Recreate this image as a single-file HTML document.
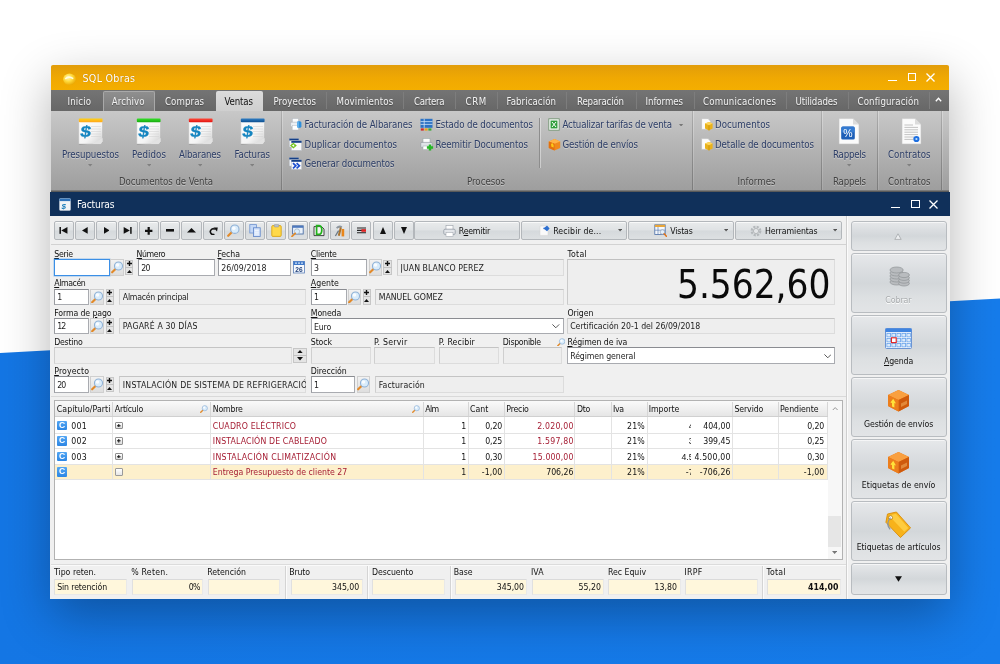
<!DOCTYPE html>
<html lang="es"><head><meta charset="utf-8"><title>SQL Obras - Facturas</title>
<style>
html,body{margin:0;padding:0}
body{width:1000px;height:664px;overflow:hidden;position:relative;background:#f7f7f7;font-family:"Liberation Sans",sans-serif}
div,span.t,svg{position:absolute;box-sizing:border-box}
span.t{display:block}
u{text-decoration:underline;text-underline-offset:1px;text-decoration-thickness:0.8px}
</style></head>
<body>
<div id="app" style="left:0;top:0;width:1000px;height:664px;overflow:hidden;will-change:transform">
<div style="left:0px;top:0px;width:1000px;height:664px;background:#ffffff"></div>
<svg style="left:0;top:0" width="1000" height="664" viewBox="0 0 1000 664"><defs><linearGradient id="bg" x1="0" x2="1" y1="0" y2="0"><stop offset="0" stop-color="#1476e4"/><stop offset="1" stop-color="#167ceb"/></linearGradient></defs><polygon points="0,353 1000,298.5 1000,664 0,664" fill="url(#bg)"/></svg>
<div style="left:51px;top:66px;width:898px;height:533px;box-shadow:0 16px 50px 0px rgba(0,0,0,0.30);background:#888;border-radius:2px"></div>
<div style="left:51px;top:65px;width:898px;height:25px;background:linear-gradient(#e29d0a,#f0a902 55%,#f4ae00);border-radius:2px 2px 0 0"></div>
<div style="left:51px;top:89.8px;width:898px;height:21px;background:linear-gradient(#747474,#676767)"></div>
<div style="left:51px;top:110.5px;width:898px;height:81px;background:linear-gradient(#c8c8c8,#b4b4b4 45%,#9d9d9d)"></div>
<div style="left:51px;top:189.5px;width:898px;height:2px;background:linear-gradient(#8a8a8a,#4a4a4a)"></div>
<svg style="left:61.6px;top:72px" width="15" height="14" viewBox="0 0 14 13"><defs><radialGradient id="lg" cx="0.4" cy="0.35" r="0.7"><stop offset="0" stop-color="#fff6b0"/><stop offset="0.5" stop-color="#ffd93a"/><stop offset="1" stop-color="#e8a400"/></radialGradient></defs><ellipse cx="7" cy="6.8" rx="6" ry="5.4" fill="url(#lg)"/><path d="M3 6.5 Q6 3.2 10.5 6.2" stroke="#fffbe0" stroke-width="1.4" fill="none"/></svg>
<span class="t" style="top:70.60px;font-size:10.6px;line-height:14.8px;color:#fff;white-space:pre;letter-spacing:0.291px;font-family:'DejaVu Sans Condensed','Liberation Sans',sans-serif;text-shadow:0 0 1px rgba(120,70,0,.5);left:82.50px;">SQL Obras</span>
<div style="left:888px;top:80.2px;width:8.5px;height:1.2px;background:#fff"></div>
<div style="left:907.5px;top:73px;width:8.6px;height:8.2px;border:1.2px solid #fff"></div>
<svg style="left:926px;top:72.7px" width="9" height="9" viewBox="0 0 9 9"><path d="M0.5 0.5 L8.5 8.5 M8.5 0.5 L0.5 8.5" stroke="#fff" stroke-width="1.3" fill="none"/></svg>
<div style="left:103px;top:91px;width:51.5px;height:19.5px;background:linear-gradient(#8f8f8f,#7a7a7a);border:1px solid #a9a9a9;border-bottom:none;border-radius:2px 2px 0 0"></div>
<div style="left:216px;top:91px;width:46.5px;height:20px;background:linear-gradient(#dcdcdc,#cfcfcf);border-radius:2px 2px 0 0"></div>
<span class="t" style="top:95.20px;font-size:9.6px;line-height:13.4px;color:#f2f2f2;white-space:pre;letter-spacing:0.131px;font-family:'DejaVu Sans Condensed','Liberation Sans',sans-serif;text-shadow:0 1px 1px rgba(0,0,0,.35);left:67.50px;">Inicio</span>
<span class="t" style="top:95.20px;font-size:9.6px;line-height:13.4px;color:#f2f2f2;white-space:pre;letter-spacing:0.083px;font-family:'DejaVu Sans Condensed','Liberation Sans',sans-serif;text-shadow:0 1px 1px rgba(0,0,0,.35);left:111.75px;">Archivo</span>
<span class="t" style="top:95.20px;font-size:9.6px;line-height:13.4px;color:#f2f2f2;white-space:pre;letter-spacing:0.078px;font-family:'DejaVu Sans Condensed','Liberation Sans',sans-serif;text-shadow:0 1px 1px rgba(0,0,0,.35);left:165.00px;">Compras</span>
<span class="t" style="top:95.20px;font-size:9.6px;line-height:13.4px;color:#111;white-space:pre;letter-spacing:-0.122px;font-family:'DejaVu Sans Condensed','Liberation Sans',sans-serif;left:224.50px;">Ventas</span>
<span class="t" style="top:95.20px;font-size:9.6px;line-height:13.4px;color:#f2f2f2;white-space:pre;letter-spacing:0.064px;font-family:'DejaVu Sans Condensed','Liberation Sans',sans-serif;text-shadow:0 1px 1px rgba(0,0,0,.35);left:273.50px;">Proyectos</span>
<span class="t" style="top:95.20px;font-size:9.6px;line-height:13.4px;color:#f2f2f2;white-space:pre;letter-spacing:0.177px;font-family:'DejaVu Sans Condensed','Liberation Sans',sans-serif;text-shadow:0 1px 1px rgba(0,0,0,.35);left:336.50px;">Movimientos</span>
<span class="t" style="top:95.20px;font-size:9.6px;line-height:13.4px;color:#f2f2f2;white-space:pre;letter-spacing:-0.318px;font-family:'DejaVu Sans Condensed','Liberation Sans',sans-serif;text-shadow:0 1px 1px rgba(0,0,0,.35);left:414.00px;">Cartera</span>
<span class="t" style="top:95.20px;font-size:9.6px;line-height:13.4px;color:#f2f2f2;white-space:pre;letter-spacing:0.633px;font-family:'DejaVu Sans Condensed','Liberation Sans',sans-serif;text-shadow:0 1px 1px rgba(0,0,0,.35);left:465.50px;">CRM</span>
<span class="t" style="top:95.20px;font-size:9.6px;line-height:13.4px;color:#f2f2f2;white-space:pre;letter-spacing:0.077px;font-family:'DejaVu Sans Condensed','Liberation Sans',sans-serif;text-shadow:0 1px 1px rgba(0,0,0,.35);left:506.50px;">Fabricación</span>
<span class="t" style="top:95.20px;font-size:9.6px;line-height:13.4px;color:#f2f2f2;white-space:pre;letter-spacing:-0.155px;font-family:'DejaVu Sans Condensed','Liberation Sans',sans-serif;text-shadow:0 1px 1px rgba(0,0,0,.35);left:577.00px;">Reparación</span>
<span class="t" style="top:95.20px;font-size:9.6px;line-height:13.4px;color:#f2f2f2;white-space:pre;letter-spacing:-0.062px;font-family:'DejaVu Sans Condensed','Liberation Sans',sans-serif;text-shadow:0 1px 1px rgba(0,0,0,.35);left:645.50px;">Informes</span>
<span class="t" style="top:95.20px;font-size:9.6px;line-height:13.4px;color:#f2f2f2;white-space:pre;letter-spacing:0.169px;font-family:'DejaVu Sans Condensed','Liberation Sans',sans-serif;text-shadow:0 1px 1px rgba(0,0,0,.35);left:703.00px;">Comunicaciones</span>
<span class="t" style="top:95.20px;font-size:9.6px;line-height:13.4px;color:#f2f2f2;white-space:pre;letter-spacing:-0.108px;font-family:'DejaVu Sans Condensed','Liberation Sans',sans-serif;text-shadow:0 1px 1px rgba(0,0,0,.35);left:795.50px;">Utilidades</span>
<span class="t" style="top:95.20px;font-size:9.6px;line-height:13.4px;color:#f2f2f2;white-space:pre;letter-spacing:0.133px;font-family:'DejaVu Sans Condensed','Liberation Sans',sans-serif;text-shadow:0 1px 1px rgba(0,0,0,.35);left:857.50px;">Configuración</span>
<div style="left:326px;top:92px;width:1px;height:17px;background:#7d7d7d"></div>
<div style="left:403px;top:92px;width:1px;height:17px;background:#7d7d7d"></div>
<div style="left:455px;top:92px;width:1px;height:17px;background:#7d7d7d"></div>
<div style="left:497px;top:92px;width:1px;height:17px;background:#7d7d7d"></div>
<div style="left:566px;top:92px;width:1px;height:17px;background:#7d7d7d"></div>
<div style="left:636px;top:92px;width:1px;height:17px;background:#7d7d7d"></div>
<div style="left:694px;top:92px;width:1px;height:17px;background:#7d7d7d"></div>
<div style="left:785.5px;top:92px;width:1px;height:17px;background:#7d7d7d"></div>
<div style="left:847.5px;top:92px;width:1px;height:17px;background:#7d7d7d"></div>
<div style="left:929px;top:92px;width:1px;height:17px;background:#7d7d7d"></div>
<svg style="left:935.4px;top:97px" width="7" height="5" viewBox="0 0 8 6"><path d="M0.8 5 L4 1.6 L7.2 5" stroke="#fff" stroke-width="1.7" fill="none"/></svg>
<svg style="left:77.6px;top:118px" width="26" height="28" viewBox="0 0 26 28">
<defs><linearGradient id="pa" x1="0" y1="0" x2="1" y2="1"><stop offset="0" stop-color="#ffffff"/><stop offset="0.6" stop-color="#f4f4f4"/><stop offset="1" stop-color="#cfcfcf"/></linearGradient>
<linearGradient id="sa" x1="0" y1="0" x2="0" y2="1"><stop offset="0" stop-color="#ffd21a"/><stop offset="1" stop-color="#ffa61a"/></linearGradient></defs>
<path d="M1.2 2 H24.8 V24.6 Q14 25.4 1.2 27 Z" fill="rgba(0,0,0,.18)"/>
<path d="M0.8 1 H24.6 V23.8 L22.6 26 H0.8 Z" fill="url(#pa)" stroke="#bdbdbd" stroke-width="0.5"/>
<rect x="0.8" y="0.6" width="23.8" height="3.6" rx="1" fill="url(#sa)"/>
<g stroke="#d4d4d4" stroke-width="0.6"><path d="M13 8.5H23M13 11H23M13 13.5H23M13 16H23M13 18.5H23"/></g>
<path d="M24.6 20 L14 26 H22.6 L24.6 23.8 Z" fill="#e2e2e2"/>
<text x="6" y="19.2" font-family="Liberation Sans, sans-serif" font-size="16" font-weight="bold" fill="#1585c0" stroke="#1585c0" stroke-width=".3" text-anchor="middle" transform="skewX(-8) translate(2.6 0) scale(1.18 1)">$</text>
</svg>
<svg style="left:136.4px;top:118px" width="26" height="28" viewBox="0 0 26 28">
<defs><linearGradient id="pb" x1="0" y1="0" x2="1" y2="1"><stop offset="0" stop-color="#ffffff"/><stop offset="0.6" stop-color="#f4f4f4"/><stop offset="1" stop-color="#cfcfcf"/></linearGradient>
<linearGradient id="sb" x1="0" y1="0" x2="0" y2="1"><stop offset="0" stop-color="#35e02a"/><stop offset="1" stop-color="#17a80f"/></linearGradient></defs>
<path d="M1.2 2 H24.8 V24.6 Q14 25.4 1.2 27 Z" fill="rgba(0,0,0,.18)"/>
<path d="M0.8 1 H24.6 V23.8 L22.6 26 H0.8 Z" fill="url(#pb)" stroke="#bdbdbd" stroke-width="0.5"/>
<rect x="0.8" y="0.6" width="23.8" height="3.6" rx="1" fill="url(#sb)"/>
<g stroke="#d4d4d4" stroke-width="0.6"><path d="M13 8.5H23M13 11H23M13 13.5H23M13 16H23M13 18.5H23"/></g>
<path d="M24.6 20 L14 26 H22.6 L24.6 23.8 Z" fill="#e2e2e2"/>
<text x="6" y="19.2" font-family="Liberation Sans, sans-serif" font-size="16" font-weight="bold" fill="#1585c0" stroke="#1585c0" stroke-width=".3" text-anchor="middle" transform="skewX(-8) translate(2.6 0) scale(1.18 1)">$</text>
</svg>
<svg style="left:187.6px;top:118px" width="26" height="28" viewBox="0 0 26 28">
<defs><linearGradient id="pc" x1="0" y1="0" x2="1" y2="1"><stop offset="0" stop-color="#ffffff"/><stop offset="0.6" stop-color="#f4f4f4"/><stop offset="1" stop-color="#cfcfcf"/></linearGradient>
<linearGradient id="sc" x1="0" y1="0" x2="0" y2="1"><stop offset="0" stop-color="#ff4a3a"/><stop offset="1" stop-color="#e0130f"/></linearGradient></defs>
<path d="M1.2 2 H24.8 V24.6 Q14 25.4 1.2 27 Z" fill="rgba(0,0,0,.18)"/>
<path d="M0.8 1 H24.6 V23.8 L22.6 26 H0.8 Z" fill="url(#pc)" stroke="#bdbdbd" stroke-width="0.5"/>
<rect x="0.8" y="0.6" width="23.8" height="3.6" rx="1" fill="url(#sc)"/>
<g stroke="#d4d4d4" stroke-width="0.6"><path d="M13 8.5H23M13 11H23M13 13.5H23M13 16H23M13 18.5H23"/></g>
<path d="M24.6 20 L14 26 H22.6 L24.6 23.8 Z" fill="#e2e2e2"/>
<text x="6" y="19.2" font-family="Liberation Sans, sans-serif" font-size="16" font-weight="bold" fill="#1585c0" stroke="#1585c0" stroke-width=".3" text-anchor="middle" transform="skewX(-8) translate(2.6 0) scale(1.18 1)">$</text>
</svg>
<svg style="left:240.4px;top:118px" width="26" height="28" viewBox="0 0 26 28">
<defs><linearGradient id="pd" x1="0" y1="0" x2="1" y2="1"><stop offset="0" stop-color="#ffffff"/><stop offset="0.6" stop-color="#f4f4f4"/><stop offset="1" stop-color="#cfcfcf"/></linearGradient>
<linearGradient id="sd" x1="0" y1="0" x2="0" y2="1"><stop offset="0" stop-color="#2f7ec4"/><stop offset="1" stop-color="#0e4f8f"/></linearGradient></defs>
<path d="M1.2 2 H24.8 V24.6 Q14 25.4 1.2 27 Z" fill="rgba(0,0,0,.18)"/>
<path d="M0.8 1 H24.6 V23.8 L22.6 26 H0.8 Z" fill="url(#pd)" stroke="#bdbdbd" stroke-width="0.5"/>
<rect x="0.8" y="0.6" width="23.8" height="3.6" rx="1" fill="url(#sd)"/>
<g stroke="#d4d4d4" stroke-width="0.6"><path d="M13 8.5H23M13 11H23M13 13.5H23M13 16H23M13 18.5H23"/></g>
<path d="M24.6 20 L14 26 H22.6 L24.6 23.8 Z" fill="#e2e2e2"/>
<text x="6" y="19.2" font-family="Liberation Sans, sans-serif" font-size="16" font-weight="bold" fill="#1585c0" stroke="#1585c0" stroke-width=".3" text-anchor="middle" transform="skewX(-8) translate(2.6 0) scale(1.18 1)">$</text>
</svg>
<span class="t" style="top:147.90px;font-size:9.6px;line-height:13.4px;color:#2c3d66;white-space:pre;letter-spacing:-0.053px;font-family:'DejaVu Sans Condensed','Liberation Sans',sans-serif;text-shadow:0 1px 0 rgba(255,255,255,.35);left:62.00px;">Presupuestos</span>
<svg style="left:88.3px;top:164.2px" width="4.4" height="2.6" viewBox="0 0 5.2 3"><path d="M0 0H5.2L2.6 3Z" fill="#808080"/></svg>
<span class="t" style="top:147.90px;font-size:9.6px;line-height:13.4px;color:#2c3d66;white-space:pre;letter-spacing:0.115px;font-family:'DejaVu Sans Condensed','Liberation Sans',sans-serif;text-shadow:0 1px 0 rgba(255,255,255,.35);left:132.00px;">Pedidos</span>
<svg style="left:146.8px;top:164.2px" width="4.4" height="2.6" viewBox="0 0 5.2 3"><path d="M0 0H5.2L2.6 3Z" fill="#808080"/></svg>
<span class="t" style="top:147.90px;font-size:9.6px;line-height:13.4px;color:#2c3d66;white-space:pre;letter-spacing:-0.148px;font-family:'DejaVu Sans Condensed','Liberation Sans',sans-serif;text-shadow:0 1px 0 rgba(255,255,255,.35);left:179.00px;">Albaranes</span>
<svg style="left:197.8px;top:164.2px" width="4.4" height="2.6" viewBox="0 0 5.2 3"><path d="M0 0H5.2L2.6 3Z" fill="#808080"/></svg>
<span class="t" style="top:147.90px;font-size:9.6px;line-height:13.4px;color:#2c3d66;white-space:pre;letter-spacing:-0.116px;font-family:'DejaVu Sans Condensed','Liberation Sans',sans-serif;text-shadow:0 1px 0 rgba(255,255,255,.35);left:234.50px;">Facturas</span>
<svg style="left:250.1px;top:164.2px" width="4.4" height="2.6" viewBox="0 0 5.2 3"><path d="M0 0H5.2L2.6 3Z" fill="#808080"/></svg>
<span class="t" style="top:147.90px;font-size:9.6px;line-height:13.4px;color:#2c3d66;white-space:pre;letter-spacing:-0.208px;font-family:'DejaVu Sans Condensed','Liberation Sans',sans-serif;text-shadow:0 1px 0 rgba(255,255,255,.35);left:833.00px;">Rappels</span>
<svg style="left:847.3px;top:164.2px" width="4.4" height="2.6" viewBox="0 0 5.2 3"><path d="M0 0H5.2L2.6 3Z" fill="#808080"/></svg>
<span class="t" style="top:147.90px;font-size:9.6px;line-height:13.4px;color:#2c3d66;white-space:pre;letter-spacing:0.043px;font-family:'DejaVu Sans Condensed','Liberation Sans',sans-serif;text-shadow:0 1px 0 rgba(255,255,255,.35);left:888.00px;">Contratos</span>
<svg style="left:907.0px;top:164.2px" width="4.4" height="2.6" viewBox="0 0 5.2 3"><path d="M0 0H5.2L2.6 3Z" fill="#808080"/></svg>
<span class="t" style="top:174.60px;font-size:9.6px;line-height:13.4px;color:#424242;white-space:pre;letter-spacing:-0.077px;font-family:'DejaVu Sans Condensed','Liberation Sans',sans-serif;text-shadow:0 1px 0 rgba(255,255,255,.35);left:119.00px;">Documentos de Venta</span>
<span class="t" style="top:174.60px;font-size:9.6px;line-height:13.4px;color:#424242;white-space:pre;font-family:'DejaVu Sans Condensed','Liberation Sans',sans-serif;text-shadow:0 1px 0 rgba(255,255,255,.35);left:467.00px;">Procesos</span>
<span class="t" style="top:174.60px;font-size:9.6px;line-height:13.4px;color:#424242;white-space:pre;letter-spacing:0.009px;font-family:'DejaVu Sans Condensed','Liberation Sans',sans-serif;text-shadow:0 1px 0 rgba(255,255,255,.35);left:737.50px;">Informes</span>
<span class="t" style="top:174.60px;font-size:9.6px;line-height:13.4px;color:#424242;white-space:pre;letter-spacing:-0.208px;font-family:'DejaVu Sans Condensed','Liberation Sans',sans-serif;text-shadow:0 1px 0 rgba(255,255,255,.35);left:833.00px;">Rappels</span>
<span class="t" style="top:174.60px;font-size:9.6px;line-height:13.4px;color:#424242;white-space:pre;letter-spacing:0.043px;font-family:'DejaVu Sans Condensed','Liberation Sans',sans-serif;text-shadow:0 1px 0 rgba(255,255,255,.35);left:888.00px;">Contratos</span>
<div style="left:281px;top:111px;width:1px;height:79px;background:linear-gradient(rgba(125,125,125,.35),rgba(105,105,105,.65))"></div>
<div style="left:282px;top:111px;width:1px;height:79px;background:linear-gradient(rgba(255,255,255,.28),rgba(255,255,255,.10))"></div>
<div style="left:692px;top:111px;width:1px;height:79px;background:linear-gradient(rgba(125,125,125,.35),rgba(105,105,105,.65))"></div>
<div style="left:693px;top:111px;width:1px;height:79px;background:linear-gradient(rgba(255,255,255,.28),rgba(255,255,255,.10))"></div>
<div style="left:821px;top:111px;width:1px;height:79px;background:linear-gradient(rgba(125,125,125,.35),rgba(105,105,105,.65))"></div>
<div style="left:822px;top:111px;width:1px;height:79px;background:linear-gradient(rgba(255,255,255,.28),rgba(255,255,255,.10))"></div>
<div style="left:877px;top:111px;width:1px;height:79px;background:linear-gradient(rgba(125,125,125,.35),rgba(105,105,105,.65))"></div>
<div style="left:878px;top:111px;width:1px;height:79px;background:linear-gradient(rgba(255,255,255,.28),rgba(255,255,255,.10))"></div>
<div style="left:941px;top:111px;width:1px;height:79px;background:linear-gradient(rgba(125,125,125,.35),rgba(105,105,105,.65))"></div>
<div style="left:942px;top:111px;width:1px;height:79px;background:linear-gradient(rgba(255,255,255,.28),rgba(255,255,255,.10))"></div>
<div style="left:539px;top:118px;width:1px;height:50px;background:#8d8d8d"></div>
<div style="left:540px;top:118px;width:1px;height:50px;background:rgba(255,255,255,.4)"></div>
<svg style="left:289.5px;top:118.0px" width="13" height="13" viewBox="0 0 13 13"><rect x="2.4" y="0.6" width="6" height="4.4" fill="#fbfcfd" stroke="#b6bcc4" stroke-width=".5"/><rect x="0.6" y="4.2" width="9" height="4.6" rx="1" fill="#eceff3" stroke="#a2a9b2" stroke-width=".5"/><rect x="2.2" y="7.4" width="6.2" height="4.6" fill="#fff" stroke="#b6bcc4" stroke-width=".5"/><rect x="7" y="3.2" width="4.4" height="6.6" rx="1.6" fill="#2f8fdc"/><rect x="7" y="3.2" width="2" height="6.6" rx="1" fill="#6cb6ee" opacity=".8"/></svg>
<span class="t" style="top:118.10px;font-size:9.6px;line-height:13.4px;color:#2c3d66;white-space:pre;letter-spacing:-0.051px;font-family:'DejaVu Sans Condensed','Liberation Sans',sans-serif;text-shadow:0 1px 0 rgba(255,255,255,.35);left:304.50px;">Facturación de Albaranes</span>
<svg style="left:288.5px;top:137.5px" width="13" height="13" viewBox="0 0 13 13"><rect x="0.3" y="0.6" width="9.4" height="8.4" fill="#f6f7f9" stroke="#aab2bd" stroke-width=".4"/><rect x="0.3" y="0.6" width="9.4" height="1.9" fill="#153f86"/><rect x="2.4" y="2.8" width="10.2" height="9.6" fill="#f9fafb" stroke="#aab2bd" stroke-width=".4"/><rect x="2.4" y="2.8" width="10.2" height="2" fill="#153f86"/><path d="M1 7.6L4.4 4.8L7.8 7.6L4.4 10.4Z" fill="#72c41c"/><path d="M2.8 7.6L5.2 6.2V9Z" fill="#fff"/></svg>
<span class="t" style="top:137.60px;font-size:9.6px;line-height:13.4px;color:#2c3d66;white-space:pre;letter-spacing:0.025px;font-family:'DejaVu Sans Condensed','Liberation Sans',sans-serif;text-shadow:0 1px 0 rgba(255,255,255,.35);left:304.50px;">Duplicar documentos</span>
<svg style="left:288.5px;top:157.0px" width="13" height="13" viewBox="0 0 13 13"><rect x="0.3" y="0.6" width="9.4" height="8.4" fill="#f6f7f9" stroke="#aab2bd" stroke-width=".4"/><rect x="0.3" y="0.6" width="9.4" height="1.9" fill="#153f86"/><rect x="2.4" y="2.8" width="10.2" height="9.6" fill="#f9fafb" stroke="#aab2bd" stroke-width=".4"/><rect x="2.4" y="2.8" width="10.2" height="2" fill="#153f86"/><path d="M4 6.2L6.8 8.8L4 11.4M7.6 6.2L10.4 8.8L7.6 11.4" stroke="#1c4fd0" stroke-width="1.7" fill="none"/></svg>
<span class="t" style="top:157.10px;font-size:9.6px;line-height:13.4px;color:#2c3d66;white-space:pre;letter-spacing:-0.073px;font-family:'DejaVu Sans Condensed','Liberation Sans',sans-serif;text-shadow:0 1px 0 rgba(255,255,255,.35);left:304.50px;">Generar documentos</span>
<svg style="left:419.5px;top:118.0px" width="13" height="13" viewBox="0 0 13 13"><rect x="0.5" y="0.8" width="12" height="9" fill="#2c72c4"/><path d="M0.5 3.6H12.5M0.5 6.4H12.5M4.2 0.8V9.8" stroke="#cfe2f7" stroke-width=".8"/><rect x="0.8" y="10.4" width="3" height="2.2" fill="#d12a2a"/><rect x="4.6" y="10.4" width="3" height="2.2" fill="#e8a21a"/><rect x="8.4" y="10.4" width="3" height="2.2" fill="#3aa935"/></svg>
<span class="t" style="top:118.10px;font-size:9.6px;line-height:13.4px;color:#2c3d66;white-space:pre;letter-spacing:-0.078px;font-family:'DejaVu Sans Condensed','Liberation Sans',sans-serif;text-shadow:0 1px 0 rgba(255,255,255,.35);left:435.50px;">Estado de documentos</span>
<svg style="left:419.5px;top:137.5px" width="14" height="13" viewBox="0 0 14 13"><rect x="3" y="0.5" width="7" height="4.6" fill="#fbfbfb" stroke="#9aa" stroke-width=".6"/><rect x="0.8" y="4.4" width="11.4" height="5" rx="1" fill="#dfe3e8" stroke="#8a929c" stroke-width=".6"/><rect x="3" y="8" width="6" height="3.6" fill="#fff" stroke="#9aa" stroke-width=".5"/><path d="M10 6.4V12.6M6.9 9.5H13.1" stroke="#25b525" stroke-width="2.4"/></svg>
<span class="t" style="top:137.60px;font-size:9.6px;line-height:13.4px;color:#2c3d66;white-space:pre;letter-spacing:-0.059px;font-family:'DejaVu Sans Condensed','Liberation Sans',sans-serif;text-shadow:0 1px 0 rgba(255,255,255,.35);left:435.50px;">Reemitir Documentos</span>
<svg style="left:547.5px;top:118.0px" width="12" height="13" viewBox="0 0 12 13"><rect x="0.8" y="0.8" width="10.4" height="11.4" fill="#eef6ee" stroke="#6c8f6c" stroke-width=".8"/><rect x="2.6" y="2.6" width="6.8" height="7.8" fill="#2f9e3a"/><path d="M4 4 L8 9 M8 4 L4 9" stroke="#fff" stroke-width="1"/></svg>
<span class="t" style="top:118.10px;font-size:9.6px;line-height:13.4px;color:#2c3d66;white-space:pre;letter-spacing:-0.165px;font-family:'DejaVu Sans Condensed','Liberation Sans',sans-serif;text-shadow:0 1px 0 rgba(255,255,255,.35);left:562.50px;">Actualizar tarifas de venta</span>
<svg style="left:547.5px;top:137.5px" width="13" height="13" viewBox="0 0 13 13"><path d="M0.8 3.4 L6.5 1 L12.2 3.4 V10 L6.5 12.6 L0.8 10Z" fill="#f08a1c"/><path d="M0.8 3.4 L6.5 5.8 L12.2 3.4 L6.5 1Z" fill="#ffb347"/><path d="M6.5 5.8V12.6L0.8 10V3.4Z" fill="#e2700f"/><path d="M3 6 L4.4 4.9 L5.6 7 V9.6 L3.4 8.8Z" fill="#ffd21a" opacity=".9"/></svg>
<span class="t" style="top:137.60px;font-size:9.6px;line-height:13.4px;color:#2c3d66;white-space:pre;letter-spacing:-0.117px;font-family:'DejaVu Sans Condensed','Liberation Sans',sans-serif;text-shadow:0 1px 0 rgba(255,255,255,.35);left:562.50px;">Gestión de envíos</span>
<svg style="left:700px;top:118.0px" width="13" height="13" viewBox="0 0 13 13"><path d="M1.6 0.6 H8 L10.6 3.2 V11.4 H1.6Z" fill="#fbfbfb" stroke="#b9b9b9" stroke-width=".6"/><path d="M5 5.6 L9 4 L12.6 5.6 V10.4 L9 12.4 L5 10.4Z" fill="#e9b21c"/><path d="M5 5.6 L9 7.2 L12.6 5.6 L9 4Z" fill="#ffd65a"/><path d="M9 7.2V12.4" stroke="#b98508" stroke-width=".6"/></svg>
<span class="t" style="top:118.10px;font-size:9.6px;line-height:13.4px;color:#2c3d66;white-space:pre;letter-spacing:0.056px;font-family:'DejaVu Sans Condensed','Liberation Sans',sans-serif;text-shadow:0 1px 0 rgba(255,255,255,.35);left:715.00px;">Documentos</span>
<svg style="left:700px;top:137.5px" width="13" height="13" viewBox="0 0 13 13"><path d="M1.6 0.6 H8 L10.6 3.2 V11.4 H1.6Z" fill="#fbfbfb" stroke="#b9b9b9" stroke-width=".6"/><path d="M5 5.6 L9 4 L12.6 5.6 V10.4 L9 12.4 L5 10.4Z" fill="#e9b21c"/><path d="M5 5.6 L9 7.2 L12.6 5.6 L9 4Z" fill="#ffd65a"/><path d="M9 7.2V12.4" stroke="#b98508" stroke-width=".6"/></svg>
<span class="t" style="top:137.60px;font-size:9.6px;line-height:13.4px;color:#2c3d66;white-space:pre;letter-spacing:-0.067px;font-family:'DejaVu Sans Condensed','Liberation Sans',sans-serif;text-shadow:0 1px 0 rgba(255,255,255,.35);left:715.00px;">Detalle de documentos</span>
<svg style="left:679.4px;top:123.6px" width="4.2" height="2.6" viewBox="0 0 5 3"><path d="M0 0H5L2.5 3Z" fill="#777"/></svg>
<svg style="left:838px;top:118px" width="22" height="27" viewBox="0 0 22 27"><path d="M1 0.6 H15 L21 6.6 V26 H1Z" fill="#fbfbfb" stroke="#c4c4c4" stroke-width=".6"/><path d="M15 0.6 V6.6 H21Z" fill="#dcdcdc"/><rect x="3.2" y="8.6" width="13.6" height="13" rx="1.6" fill="#1d5fb8"/><rect x="3.2" y="8.6" width="13.6" height="6" rx="1.6" fill="#3f86da" opacity=".7"/><text x="10" y="19.4" font-family="Liberation Sans, sans-serif" font-size="10.5" fill="#fff" text-anchor="middle">%</text></svg>
<svg style="left:900.5px;top:118px" width="21" height="27" viewBox="0 0 21 27"><path d="M1 0.6 H14 L20 6.6 V26 H1Z" fill="#fbfbfb" stroke="#c4c4c4" stroke-width=".6"/><path d="M14 0.6 V6.6 H20Z" fill="#dcdcdc"/><g stroke="#b5b5b5" stroke-width=".8"><path d="M3.4 7H12M3.4 9.4H17M3.4 11.8H17M3.4 14.2H17M3.4 16.6H17M3.4 19H13M3.4 21.4H12"/></g><circle cx="15.4" cy="21" r="3.1" fill="#1e6fe0"/><circle cx="15.4" cy="21" r="1.1" fill="#bfe0ff"/></svg>
<div style="left:50.4px;top:191.6px;width:900px;height:407.6px;background:#f0f0f0"></div>
<div style="left:50.4px;top:191.6px;width:900px;height:24px;background:#10305a"></div>
<svg style="left:59px;top:197.6px" width="12" height="13" viewBox="0 0 12 13"><rect x="0.5" y="0.5" width="11" height="12" rx="1" fill="#f1f3f6" stroke="#c9d2de" stroke-width=".5"/><rect x="0.5" y="0.5" width="11" height="2.6" fill="#2f72b8"/><text x="4.8" y="10.6" font-family="Liberation Sans, sans-serif" font-size="8" font-weight="bold" font-style="italic" fill="#1379b8" text-anchor="middle">$</text></svg>
<span class="t" style="top:197.65px;font-size:10.2px;line-height:14.3px;color:#fff;white-space:pre;letter-spacing:-0.152px;font-family:'DejaVu Sans Condensed','Liberation Sans',sans-serif;left:77.00px;">Facturas</span>
<div style="left:891px;top:207.2px;width:8.5px;height:1.2px;background:#fff"></div>
<div style="left:911px;top:200px;width:8.6px;height:8.2px;border:1.2px solid #fff"></div>
<svg style="left:929px;top:199.7px" width="9" height="9" viewBox="0 0 9 9"><path d="M0.5 0.5 L8.5 8.5 M8.5 0.5 L0.5 8.5" stroke="#fff" stroke-width="1.3" fill="none"/></svg>
<div style="left:54px;top:220.5px;width:20.1px;height:19.8px;background:linear-gradient(#e9ebec,#dfe2e4 48%,#d5d9dc 52%,#dde0e2);border:1px solid #b3b7bb;border-radius:2px;box-shadow:inset 0 1px 0 rgba(255,255,255,.7)"></div>
<div style="left:75.24px;top:220.5px;width:20.1px;height:19.8px;background:linear-gradient(#e9ebec,#dfe2e4 48%,#d5d9dc 52%,#dde0e2);border:1px solid #b3b7bb;border-radius:2px;box-shadow:inset 0 1px 0 rgba(255,255,255,.7)"></div>
<div style="left:96.48px;top:220.5px;width:20.1px;height:19.8px;background:linear-gradient(#e9ebec,#dfe2e4 48%,#d5d9dc 52%,#dde0e2);border:1px solid #b3b7bb;border-radius:2px;box-shadow:inset 0 1px 0 rgba(255,255,255,.7)"></div>
<div style="left:117.72px;top:220.5px;width:20.1px;height:19.8px;background:linear-gradient(#e9ebec,#dfe2e4 48%,#d5d9dc 52%,#dde0e2);border:1px solid #b3b7bb;border-radius:2px;box-shadow:inset 0 1px 0 rgba(255,255,255,.7)"></div>
<div style="left:138.96px;top:220.5px;width:20.1px;height:19.8px;background:linear-gradient(#e9ebec,#dfe2e4 48%,#d5d9dc 52%,#dde0e2);border:1px solid #b3b7bb;border-radius:2px;box-shadow:inset 0 1px 0 rgba(255,255,255,.7)"></div>
<div style="left:160.2px;top:220.5px;width:20.1px;height:19.8px;background:linear-gradient(#e9ebec,#dfe2e4 48%,#d5d9dc 52%,#dde0e2);border:1px solid #b3b7bb;border-radius:2px;box-shadow:inset 0 1px 0 rgba(255,255,255,.7)"></div>
<div style="left:181.44px;top:220.5px;width:20.1px;height:19.8px;background:linear-gradient(#e9ebec,#dfe2e4 48%,#d5d9dc 52%,#dde0e2);border:1px solid #b3b7bb;border-radius:2px;box-shadow:inset 0 1px 0 rgba(255,255,255,.7)"></div>
<div style="left:202.68px;top:220.5px;width:20.1px;height:19.8px;background:linear-gradient(#e9ebec,#dfe2e4 48%,#d5d9dc 52%,#dde0e2);border:1px solid #b3b7bb;border-radius:2px;box-shadow:inset 0 1px 0 rgba(255,255,255,.7)"></div>
<div style="left:223.92px;top:220.5px;width:20.1px;height:19.8px;background:linear-gradient(#e9ebec,#dfe2e4 48%,#d5d9dc 52%,#dde0e2);border:1px solid #b3b7bb;border-radius:2px;box-shadow:inset 0 1px 0 rgba(255,255,255,.7)"></div>
<div style="left:245.16px;top:220.5px;width:20.1px;height:19.8px;background:linear-gradient(#e9ebec,#dfe2e4 48%,#d5d9dc 52%,#dde0e2);border:1px solid #b3b7bb;border-radius:2px;box-shadow:inset 0 1px 0 rgba(255,255,255,.7)"></div>
<div style="left:266.4px;top:220.5px;width:20.1px;height:19.8px;background:linear-gradient(#e9ebec,#dfe2e4 48%,#d5d9dc 52%,#dde0e2);border:1px solid #b3b7bb;border-radius:2px;box-shadow:inset 0 1px 0 rgba(255,255,255,.7)"></div>
<div style="left:287.64px;top:220.5px;width:20.1px;height:19.8px;background:linear-gradient(#e9ebec,#dfe2e4 48%,#d5d9dc 52%,#dde0e2);border:1px solid #b3b7bb;border-radius:2px;box-shadow:inset 0 1px 0 rgba(255,255,255,.7)"></div>
<div style="left:308.88px;top:220.5px;width:20.1px;height:19.8px;background:linear-gradient(#e9ebec,#dfe2e4 48%,#d5d9dc 52%,#dde0e2);border:1px solid #b3b7bb;border-radius:2px;box-shadow:inset 0 1px 0 rgba(255,255,255,.7)"></div>
<div style="left:330.12px;top:220.5px;width:20.1px;height:19.8px;background:linear-gradient(#e9ebec,#dfe2e4 48%,#d5d9dc 52%,#dde0e2);border:1px solid #b3b7bb;border-radius:2px;box-shadow:inset 0 1px 0 rgba(255,255,255,.7)"></div>
<div style="left:351.36px;top:220.5px;width:20.1px;height:19.8px;background:linear-gradient(#e9ebec,#dfe2e4 48%,#d5d9dc 52%,#dde0e2);border:1px solid #b3b7bb;border-radius:2px;box-shadow:inset 0 1px 0 rgba(255,255,255,.7)"></div>
<div style="left:372.6px;top:220.5px;width:20.1px;height:19.8px;background:linear-gradient(#e9ebec,#dfe2e4 48%,#d5d9dc 52%,#dde0e2);border:1px solid #b3b7bb;border-radius:2px;box-shadow:inset 0 1px 0 rgba(255,255,255,.7)"></div>
<div style="left:393.84px;top:220.5px;width:20.1px;height:19.8px;background:linear-gradient(#e9ebec,#dfe2e4 48%,#d5d9dc 52%,#dde0e2);border:1px solid #b3b7bb;border-radius:2px;box-shadow:inset 0 1px 0 rgba(255,255,255,.7)"></div>
<svg style="left:59.49px;top:227.28px" width="9.12" height="6.84" viewBox="0 0 8 6"><rect x="0.4" y="0" width="1.3" height="6" fill="#111"/><path d="M7.4 0V6L2 3Z" fill="#111"/></svg>
<svg style="left:82.44px;top:227.28px" width="5.699999999999999" height="6.84" viewBox="0 0 5 6"><path d="M5 0V6L0 3Z" fill="#111"/></svg>
<svg style="left:103.68px;top:227.28px" width="5.699999999999999" height="6.84" viewBox="0 0 5 6"><path d="M0 0V6L5 3Z" fill="#111"/></svg>
<svg style="left:123.21px;top:227.28px" width="9.12" height="6.84" viewBox="0 0 8 6"><rect x="6.3" y="0" width="1.3" height="6" fill="#111"/><path d="M0.6 0V6L6 3Z" fill="#111"/></svg>
<svg style="left:145.31px;top:226.80px" width="7.4" height="7.8" viewBox="0 0 7.4 7.8"><path d="M3.7 0V7.8M0 3.9H7.4" stroke="#111" stroke-width="2.2"/></svg>
<svg style="left:166.25px;top:229.40px" width="8.0" height="2.6" viewBox="0 0 8 2.6"><rect x="0" y="0" width="8" height="2.6" fill="#111"/></svg>
<svg style="left:186.99px;top:228.30px" width="9.0" height="4.4" viewBox="0 0 9 4.4"><path d="M0 4.4H9L4.5 0Z" fill="#111"/></svg>
<svg style="left:208.53px;top:226.50px" width="9.0" height="8.0" viewBox="0 0 9 8"><path d="M5.4 7.2A2.8 2.8 0 1 1 5.8 2.4" stroke="#111" stroke-width="1.6" fill="none"/><path d="M4.4 0.6L8.8 0.4L8 4.6Z" fill="#111"/></svg>
<svg style="left:227.47px;top:224.20px" width="13.00" height="13.00" viewBox="0 0 13 13"><path d="M1.2 11.8L5 8" stroke="#e28a2a" stroke-width="2.2" stroke-linecap="round"/><circle cx="7.8" cy="5.2" r="4.2" fill="#d9ecfb" stroke="#8fb1d6" stroke-width="1.1"/><circle cx="6.8" cy="4.2" r="1.8" fill="#fff" opacity=".85"/></svg>
<svg style="left:249.21px;top:224.20px" width="12.0" height="13.0" viewBox="0 0 12 13"><rect x="0.8" y="0.6" width="6.6" height="8.4" fill="#c4d8f6" stroke="#6f93d0" stroke-width=".8"/><rect x="4.4" y="3.8" width="6.8" height="8.6" fill="#d6e4fa" stroke="#5a82c8" stroke-width=".8"/><path d="M5.8 6.4H9.8M5.8 8.2H9.8M5.8 10H9.8" stroke="#f4f8ff" stroke-width=".9"/></svg>
<svg style="left:270.95px;top:224.20px" width="11.0" height="13.0" viewBox="0 0 11 13"><rect x="0.8" y="1.6" width="9.4" height="10.8" rx="1" fill="#ffd94a" stroke="#d9a514" stroke-width=".9"/><rect x="3.2" y="0.4" width="4.6" height="2.6" rx=".8" fill="#b9bfc6" stroke="#8a9098" stroke-width=".5"/></svg>
<svg style="left:291.19px;top:224.70px" width="13.0" height="12.0" viewBox="0 0 13 12"><rect x="1.6" y="0.8" width="10.6" height="8.2" fill="#eaf2fb" stroke="#4d6fa6" stroke-width=".9"/><rect x="1.6" y="0.8" width="10.6" height="2" fill="#4d78bd"/><circle cx="6" cy="6.4" r="2.6" fill="#d9ecfb" stroke="#9ab" stroke-width=".7"/><path d="M1 11.4L4.2 8.4" stroke="#e28a2a" stroke-width="1.7" stroke-linecap="round"/></svg>
<svg style="left:312.93px;top:224.20px" width="12.0" height="13.0" viewBox="0 0 12 13"><path d="M1 2.6H8.6L11 5V11.6H1Z" fill="#f3f3f3" stroke="#333" stroke-width=".9"/><path d="M3.6 1.6V10.4H6.2Q8.8 10 8.8 6T6.2 1.6Z" fill="none" stroke="#22b31c" stroke-width="1.7"/></svg>
<svg style="left:334.17px;top:224.20px" width="12.0" height="13.0" viewBox="0 0 12 13"><path d="M2 3.4Q5 0.4 8.4 2.4L7.2 4Q5 3 3.2 4.8Z" fill="#8e979f"/><rect x="5" y="3.4" width="2" height="8.6" fill="#a8722c" transform="rotate(14 6 7)"/><rect x="7.6" y="5" width="2.6" height="7.4" fill="#e9861a"/><path d="M1.4 12L4.6 6.6" stroke="#6c7a86" stroke-width="1.3"/></svg>
<svg style="left:356.91px;top:227.20px" width="9.0" height="7.0" viewBox="0 0 9 7"><path d="M0 1H9M0 3.4H9M0 5.8H9" stroke="#222" stroke-width="1.1"/><rect x="4.4" y="2.2" width="4.6" height="2.6" fill="#e02222"/></svg>
<svg style="left:379.65px;top:226.90px" width="6.0" height="7.0" viewBox="0 0 6 7"><path d="M0 7H6L3 0Z" fill="#111"/></svg>
<svg style="left:400.89px;top:227.40px" width="6.0" height="7.0" viewBox="0 0 6 7"><path d="M0 0H6L3 7Z" fill="#111"/></svg>
<div style="left:414.4px;top:220.5px;width:105.4px;height:19.8px;background:linear-gradient(#e9ebec,#dfe2e4 48%,#d5d9dc 52%,#dde0e2);border:1px solid #b3b7bb;border-radius:2px;box-shadow:inset 0 1px 0 rgba(255,255,255,.7)"></div>
<div style="left:521.3px;top:220.5px;width:105.4px;height:19.8px;background:linear-gradient(#e9ebec,#dfe2e4 48%,#d5d9dc 52%,#dde0e2);border:1px solid #b3b7bb;border-radius:2px;box-shadow:inset 0 1px 0 rgba(255,255,255,.7)"></div>
<div style="left:628px;top:220.5px;width:105.6px;height:19.8px;background:linear-gradient(#e9ebec,#dfe2e4 48%,#d5d9dc 52%,#dde0e2);border:1px solid #b3b7bb;border-radius:2px;box-shadow:inset 0 1px 0 rgba(255,255,255,.7)"></div>
<div style="left:735px;top:220.5px;width:106.8px;height:19.8px;background:linear-gradient(#e9ebec,#dfe2e4 48%,#d5d9dc 52%,#dde0e2);border:1px solid #b3b7bb;border-radius:2px;box-shadow:inset 0 1px 0 rgba(255,255,255,.7)"></div>
<svg style="left:443.10px;top:224.70px" width="13.0" height="12.0" viewBox="0 0 13 12"><rect x="3" y="0.6" width="7" height="4.6" fill="#fdfdfd" stroke="#9aa0a8" stroke-width=".6"/><rect x="0.8" y="4.2" width="11.4" height="5.2" rx="1.2" fill="#e3e6ea" stroke="#8a929c" stroke-width=".7"/><rect x="3" y="7.6" width="7" height="3.8" fill="#fff" stroke="#9aa0a8" stroke-width=".5"/></svg>
<span class="t" style="top:224.50px;font-size:8.7px;line-height:12.2px;color:#111;white-space:pre;letter-spacing:-0.201px;font-family:'DejaVu Sans Condensed','Liberation Sans',sans-serif;left:458.80px;">R<u>e</u>emitir</span>
<svg style="left:538.70px;top:224.60px" width="11.0" height="11.0" viewBox="0 0 11 11"><path d="M1 1H6.6L9 3.4V10.4H1Z" fill="#fafafa" stroke="#d0d0d0" stroke-width=".5"/><path d="M4.6 3.4L8 0.6L10.6 3.4L8 6.2Z" fill="#2d6fd0"/><path d="M4.4 3.4H7" stroke="#2d6fd0" stroke-width="1.4"/></svg>
<span class="t" style="top:224.50px;font-size:8.7px;line-height:12.2px;color:#111;white-space:pre;letter-spacing:0.135px;font-family:'DejaVu Sans Condensed','Liberation Sans',sans-serif;left:553.20px;">Recibir de...</span>
<svg style="left:617.8px;top:229.2px" width="4.2" height="2.6" viewBox="0 0 4.2 2.6"><path d="M0 0H4.2L2.1 2.6Z" fill="#555"/></svg>
<svg style="left:723.8px;top:229.2px" width="4.2" height="2.6" viewBox="0 0 4.2 2.6"><path d="M0 0H4.2L2.1 2.6Z" fill="#555"/></svg>
<svg style="left:832.8px;top:229.2px" width="4.2" height="2.6" viewBox="0 0 4.2 2.6"><path d="M0 0H4.2L2.1 2.6Z" fill="#555"/></svg>
<svg style="left:654.00px;top:224.20px" width="13.0" height="13.0" viewBox="0 0 13 13"><rect x="0.8" y="0.8" width="10.4" height="9.6" fill="#f5f8fc" stroke="#4a6ea8" stroke-width=".8"/><rect x="0.8" y="0.8" width="10.4" height="2.2" fill="#e9a63a"/><path d="M4 3V10.4M0.8 6.2H11.2" stroke="#4a6ea8" stroke-width=".6"/><circle cx="8.4" cy="8" r="2.3" fill="#e3effb" stroke="#8c9db5" stroke-width=".7"/><path d="M10.2 9.8L12.4 12.2" stroke="#e2741a" stroke-width="1.5" stroke-linecap="round"/></svg>
<span class="t" style="top:224.50px;font-size:8.7px;line-height:12.2px;color:#111;white-space:pre;letter-spacing:-0.146px;font-family:'DejaVu Sans Condensed','Liberation Sans',sans-serif;left:670.20px;">Vistas</span>
<svg style="left:749.80px;top:224.70px" width="12.0" height="12.0" viewBox="0 0 12 12"><circle cx="6" cy="6" r="4.3" fill="none" stroke="#b4b8bb" stroke-width="2.2" stroke-dasharray="2.2 1.2"/><circle cx="6" cy="6" r="2.6" fill="#e4e6e8" stroke="#a9adb0" stroke-width=".8"/></svg>
<span class="t" style="top:224.50px;font-size:8.7px;line-height:12.2px;color:#111;white-space:pre;letter-spacing:-0.058px;font-family:'DejaVu Sans Condensed','Liberation Sans',sans-serif;left:765.00px;">Herramientas</span>
<div style="left:51px;top:244px;width:795.5px;height:1px;background:#d2d2d2"></div>
<div style="left:846px;top:216px;width:1px;height:383px;background:#cfcfcf"></div>
<div style="left:847px;top:216px;width:1px;height:383px;background:#fbfbfb"></div>
<span class="t" style="top:247.90px;font-size:8.7px;line-height:12.2px;color:#111;white-space:pre;letter-spacing:-0.246px;font-family:'DejaVu Sans Condensed','Liberation Sans',sans-serif;left:54.20px;"><u>S</u>erie</span>
<div style="left:54.2px;top:259.2px;width:55.6px;height:16.5px;background:#fff;border:1px solid #3b8fe6;box-shadow:0 0 0 .5px rgba(59,143,230,.5)"></div>
<div style="left:110.4px;top:259.2px;width:13.8px;height:16.5px;background:linear-gradient(#f2f2f2,#dedede);border:1px solid #cfcfcf"></div>
<svg style="left:111.06px;top:261.21px" width="12.48" height="12.48" viewBox="0 0 13 13"><path d="M1.2 11.8L5 8" stroke="#e28a2a" stroke-width="2.2" stroke-linecap="round"/><circle cx="7.8" cy="5.2" r="4.2" fill="#d9ecfb" stroke="#8fb1d6" stroke-width="1.1"/><circle cx="6.8" cy="4.2" r="1.8" fill="#fff" opacity=".85"/></svg>
<div style="left:125.2px;top:259.6px;width:8.2px;height:15.7px;background:#e4e4e4;border:1px solid #c6c6c6"></div>
<div style="left:125.2px;top:267.05px;width:8.2px;height:0.8px;background:#c2c2c2"></div>
<svg style="left:126.80px;top:261.10px" width="5.0" height="5.0" viewBox="0 0 5 5"><path d="M2.5 0V5M0 2.5H5" stroke="#111" stroke-width="1.4"/></svg>
<svg style="left:126.80px;top:269.90px" width="5.0" height="3.0" viewBox="0 0 5 3"><path d="M0 3H5L2.5 0Z" fill="#111"/></svg>
<span class="t" style="top:247.90px;font-size:8.7px;line-height:12.2px;color:#111;white-space:pre;letter-spacing:-0.409px;font-family:'DejaVu Sans Condensed','Liberation Sans',sans-serif;left:136.60px;"><u>N</u>úmero</span>
<div style="left:138.2px;top:259.2px;width:77px;height:16.5px;background:#fff;border:1px solid #a9abb0;border-top-color:#8a8c91;border-left-color:#9a9ca1"></div>
<span class="t" style="top:261.75px;font-size:8.7px;line-height:12.2px;color:#222;white-space:pre;letter-spacing:-0.753px;font-family:'DejaVu Sans Condensed','Liberation Sans',sans-serif;left:141.20px;">20</span>
<span class="t" style="top:247.90px;font-size:8.7px;line-height:12.2px;color:#111;white-space:pre;letter-spacing:-0.073px;font-family:'DejaVu Sans Condensed','Liberation Sans',sans-serif;left:217.40px;"><u>F</u>echa</span>
<div style="left:218.2px;top:259.2px;width:73.2px;height:16.5px;background:#fff;border:1px solid #a9abb0;border-top-color:#8a8c91;border-left-color:#9a9ca1"></div>
<span class="t" style="top:261.75px;font-size:8.7px;line-height:12.2px;color:#222;white-space:pre;letter-spacing:0.017px;font-family:'DejaVu Sans Condensed','Liberation Sans',sans-serif;left:221.20px;">26/09/2018</span>
<svg style="left:292.6px;top:261.4px" width="12" height="12.4" viewBox="0 0 12 12.4"><rect x="0.4" y="0.4" width="11.2" height="11.6" fill="#f6f9fd" stroke="#5b7fb8" stroke-width=".8"/><rect x="0.4" y="0.4" width="11.2" height="3.6" fill="#3f78c8"/><path d="M2 2.2H4M5 2.2H7M8 2.2H10" stroke="#cfe1f6" stroke-width="1.2"/><text x="6" y="10.6" font-size="6.6" font-weight="bold" font-family="Liberation Sans, sans-serif" text-anchor="middle" fill="#1e3e78">26</text></svg>
<span class="t" style="top:247.90px;font-size:8.7px;line-height:12.2px;color:#111;white-space:pre;letter-spacing:-0.242px;font-family:'DejaVu Sans Condensed','Liberation Sans',sans-serif;left:310.80px;"><u>C</u>liente</span>
<div style="left:311px;top:259.2px;width:56.2px;height:16.5px;background:#fff;border:1px solid #a9abb0;border-top-color:#8a8c91;border-left-color:#9a9ca1"></div>
<span class="t" style="top:261.75px;font-size:8.7px;line-height:12.2px;color:#222;white-space:pre;font-family:'DejaVu Sans Condensed','Liberation Sans',sans-serif;left:314.00px;">3</span>
<div style="left:368.6px;top:259.2px;width:13px;height:16.5px;background:linear-gradient(#f2f2f2,#dedede);border:1px solid #cfcfcf"></div>
<svg style="left:368.86px;top:261.21px" width="12.48" height="12.48" viewBox="0 0 13 13"><path d="M1.2 11.8L5 8" stroke="#e28a2a" stroke-width="2.2" stroke-linecap="round"/><circle cx="7.8" cy="5.2" r="4.2" fill="#d9ecfb" stroke="#8fb1d6" stroke-width="1.1"/><circle cx="6.8" cy="4.2" r="1.8" fill="#fff" opacity=".85"/></svg>
<div style="left:383px;top:259.6px;width:8.6px;height:15.7px;background:#e4e4e4;border:1px solid #c6c6c6"></div>
<div style="left:383px;top:267.05px;width:8.6px;height:0.8px;background:#c2c2c2"></div>
<svg style="left:384.80px;top:261.10px" width="5.0" height="5.0" viewBox="0 0 5 5"><path d="M2.5 0V5M0 2.5H5" stroke="#111" stroke-width="1.4"/></svg>
<svg style="left:384.80px;top:269.90px" width="5.0" height="3.0" viewBox="0 0 5 3"><path d="M0 3H5L2.5 0Z" fill="#111"/></svg>
<div style="left:397px;top:259.2px;width:167px;height:16.5px;background:#eeeeee;border:1px solid #dcdcdc;border-top-color:#c4c4c4;border-left-color:#cfcfcf"></div>
<span class="t" style="top:261.75px;font-size:8.7px;line-height:12.2px;color:#222;white-space:pre;letter-spacing:0.058px;font-family:'DejaVu Sans Condensed','Liberation Sans',sans-serif;max-width:162.9px;overflow:hidden;left:400.60px;">JUAN BLANCO PEREZ</span>
<span class="t" style="top:247.90px;font-size:8.7px;line-height:12.2px;color:#111;white-space:pre;letter-spacing:0.323px;font-family:'DejaVu Sans Condensed','Liberation Sans',sans-serif;left:567.40px;">Total</span>
<div style="left:567.2px;top:259.2px;width:267.4px;height:45.4px;background:#eeeeee;border:1px solid #dcdcdc;border-top-color:#c0c0c0;border-left-color:#cacaca"></div>
<span class="t" style="top:258.30px;font-size:38.4px;line-height:53.8px;color:#0a0a0a;white-space:pre;letter-spacing:-0.050px;font-family:'DejaVu Sans Condensed','Liberation Sans',sans-serif;right:169.65px;">5.562,60</span>
<span class="t" style="top:277.20px;font-size:8.7px;line-height:12.2px;color:#111;white-space:pre;letter-spacing:-0.400px;font-family:'DejaVu Sans Condensed','Liberation Sans',sans-serif;left:54.20px;"><u>A</u>lmacén</span>
<div style="left:54.2px;top:288.5px;width:35px;height:16.5px;background:#fff;border:1px solid #a9abb0;border-top-color:#8a8c91;border-left-color:#9a9ca1"></div>
<span class="t" style="top:291.05px;font-size:8.7px;line-height:12.2px;color:#222;white-space:pre;font-family:'DejaVu Sans Condensed','Liberation Sans',sans-serif;left:57.20px;">1</span>
<div style="left:90.2px;top:288.5px;width:14.2px;height:16.5px;background:linear-gradient(#f2f2f2,#dedede);border:1px solid #cfcfcf"></div>
<svg style="left:91.06px;top:290.51px" width="12.48" height="12.48" viewBox="0 0 13 13"><path d="M1.2 11.8L5 8" stroke="#e28a2a" stroke-width="2.2" stroke-linecap="round"/><circle cx="7.8" cy="5.2" r="4.2" fill="#d9ecfb" stroke="#8fb1d6" stroke-width="1.1"/><circle cx="6.8" cy="4.2" r="1.8" fill="#fff" opacity=".85"/></svg>
<div style="left:105.6px;top:288.9px;width:8px;height:15.7px;background:#e4e4e4;border:1px solid #c6c6c6"></div>
<div style="left:105.6px;top:296.35px;width:8px;height:0.8px;background:#c2c2c2"></div>
<svg style="left:107.10px;top:290.40px" width="5.0" height="5.0" viewBox="0 0 5 5"><path d="M2.5 0V5M0 2.5H5" stroke="#111" stroke-width="1.4"/></svg>
<svg style="left:107.10px;top:299.20px" width="5.0" height="3.0" viewBox="0 0 5 3"><path d="M0 3H5L2.5 0Z" fill="#111"/></svg>
<div style="left:119px;top:288.5px;width:187.4px;height:16.5px;background:#eeeeee;border:1px solid #dcdcdc;border-top-color:#c4c4c4;border-left-color:#cfcfcf"></div>
<span class="t" style="top:291.05px;font-size:8.7px;line-height:12.2px;color:#222;white-space:pre;letter-spacing:-0.261px;font-family:'DejaVu Sans Condensed','Liberation Sans',sans-serif;max-width:183.1px;overflow:hidden;left:122.80px;">Almacén principal</span>
<span class="t" style="top:277.20px;font-size:8.7px;line-height:12.2px;color:#111;white-space:pre;letter-spacing:0.006px;font-family:'DejaVu Sans Condensed','Liberation Sans',sans-serif;left:310.80px;"><u>A</u>gente</span>
<div style="left:311px;top:288.5px;width:35.8px;height:16.5px;background:#fff;border:1px solid #a9abb0;border-top-color:#8a8c91;border-left-color:#9a9ca1"></div>
<span class="t" style="top:291.05px;font-size:8.7px;line-height:12.2px;color:#222;white-space:pre;font-family:'DejaVu Sans Condensed','Liberation Sans',sans-serif;left:314.00px;">1</span>
<div style="left:348px;top:288.5px;width:13.4px;height:16.5px;background:linear-gradient(#f2f2f2,#dedede);border:1px solid #cfcfcf"></div>
<svg style="left:348.46px;top:290.51px" width="12.48" height="12.48" viewBox="0 0 13 13"><path d="M1.2 11.8L5 8" stroke="#e28a2a" stroke-width="2.2" stroke-linecap="round"/><circle cx="7.8" cy="5.2" r="4.2" fill="#d9ecfb" stroke="#8fb1d6" stroke-width="1.1"/><circle cx="6.8" cy="4.2" r="1.8" fill="#fff" opacity=".85"/></svg>
<div style="left:362.8px;top:288.9px;width:8.2px;height:15.7px;background:#e4e4e4;border:1px solid #c6c6c6"></div>
<div style="left:362.8px;top:296.35px;width:8.2px;height:0.8px;background:#c2c2c2"></div>
<svg style="left:364.40px;top:290.40px" width="5.0" height="5.0" viewBox="0 0 5 5"><path d="M2.5 0V5M0 2.5H5" stroke="#111" stroke-width="1.4"/></svg>
<svg style="left:364.40px;top:299.20px" width="5.0" height="3.0" viewBox="0 0 5 3"><path d="M0 3H5L2.5 0Z" fill="#111"/></svg>
<div style="left:375px;top:288.5px;width:189px;height:16.5px;background:#eeeeee;border:1px solid #dcdcdc;border-top-color:#c4c4c4;border-left-color:#cfcfcf"></div>
<span class="t" style="top:291.05px;font-size:8.7px;line-height:12.2px;color:#222;white-space:pre;letter-spacing:-0.062px;font-family:'DejaVu Sans Condensed','Liberation Sans',sans-serif;max-width:184.7px;overflow:hidden;left:378.80px;">MANUEL GOMEZ</span>
<span class="t" style="top:306.50px;font-size:8.7px;line-height:12.2px;color:#111;white-space:pre;letter-spacing:-0.107px;font-family:'DejaVu Sans Condensed','Liberation Sans',sans-serif;left:54.20px;">Forma de <u>p</u>ago</span>
<div style="left:54.2px;top:317.8px;width:35px;height:16.5px;background:#fff;border:1px solid #a9abb0;border-top-color:#8a8c91;border-left-color:#9a9ca1"></div>
<span class="t" style="top:320.35px;font-size:8.7px;line-height:12.2px;color:#222;white-space:pre;letter-spacing:-0.900px;font-family:'DejaVu Sans Condensed','Liberation Sans',sans-serif;left:57.20px;">12</span>
<div style="left:90.2px;top:317.8px;width:14.2px;height:16.5px;background:linear-gradient(#f2f2f2,#dedede);border:1px solid #cfcfcf"></div>
<svg style="left:91.06px;top:319.81px" width="12.48" height="12.48" viewBox="0 0 13 13"><path d="M1.2 11.8L5 8" stroke="#e28a2a" stroke-width="2.2" stroke-linecap="round"/><circle cx="7.8" cy="5.2" r="4.2" fill="#d9ecfb" stroke="#8fb1d6" stroke-width="1.1"/><circle cx="6.8" cy="4.2" r="1.8" fill="#fff" opacity=".85"/></svg>
<div style="left:105.6px;top:318.2px;width:8px;height:15.7px;background:#e4e4e4;border:1px solid #c6c6c6"></div>
<div style="left:105.6px;top:325.65px;width:8px;height:0.8px;background:#c2c2c2"></div>
<svg style="left:107.10px;top:319.70px" width="5.0" height="5.0" viewBox="0 0 5 5"><path d="M2.5 0V5M0 2.5H5" stroke="#111" stroke-width="1.4"/></svg>
<svg style="left:107.10px;top:328.50px" width="5.0" height="3.0" viewBox="0 0 5 3"><path d="M0 3H5L2.5 0Z" fill="#111"/></svg>
<div style="left:119px;top:317.8px;width:187.4px;height:16.5px;background:#eeeeee;border:1px solid #dcdcdc;border-top-color:#c4c4c4;border-left-color:#cfcfcf"></div>
<span class="t" style="top:320.35px;font-size:8.7px;line-height:12.2px;color:#222;white-space:pre;letter-spacing:0.141px;font-family:'DejaVu Sans Condensed','Liberation Sans',sans-serif;max-width:183.1px;overflow:hidden;left:122.80px;">PAGARÉ A 30 DÍAS</span>
<span class="t" style="top:306.50px;font-size:8.7px;line-height:12.2px;color:#111;white-space:pre;letter-spacing:-0.133px;font-family:'DejaVu Sans Condensed','Liberation Sans',sans-serif;left:310.80px;"><u>M</u>oneda</span>
<div style="left:311px;top:317.8px;width:253px;height:16.5px;background:#fff;border:1px solid #a9abb0;border-top-color:#8a8c91"></div>
<span class="t" style="top:321.05px;font-size:8.7px;line-height:12.2px;color:#222;white-space:pre;letter-spacing:-0.168px;font-family:'DejaVu Sans Condensed','Liberation Sans',sans-serif;left:314.00px;">Euro</span>
<svg style="left:552.4px;top:324.2px" width="7.6" height="4.4" viewBox="0 0 7.6 4.4"><path d="M0.4 0.4L3.8 3.8L7.2 0.4" stroke="#444" stroke-width=".9" fill="none"/></svg>
<span class="t" style="top:306.50px;font-size:8.7px;line-height:12.2px;color:#111;white-space:pre;letter-spacing:-0.053px;font-family:'DejaVu Sans Condensed','Liberation Sans',sans-serif;left:567.40px;">Origen</span>
<div style="left:567.2px;top:317.8px;width:268px;height:16.5px;background:#eeeeee;border:1px solid #dcdcdc;border-top-color:#c4c4c4;border-left-color:#cfcfcf"></div>
<span class="t" style="top:320.35px;font-size:8.7px;line-height:12.2px;color:#222;white-space:pre;letter-spacing:-0.034px;font-family:'DejaVu Sans Condensed','Liberation Sans',sans-serif;max-width:264.5px;overflow:hidden;left:570.20px;">Certificación 20-1 del 26/09/2018</span>
<span class="t" style="top:335.80px;font-size:8.7px;line-height:12.2px;color:#111;white-space:pre;letter-spacing:-0.212px;font-family:'DejaVu Sans Condensed','Liberation Sans',sans-serif;left:54.20px;">Destino</span>
<div style="left:54.2px;top:347.1px;width:238.2px;height:16.5px;background:#eeeeee;border:1px solid #dcdcdc;border-top-color:#c4c4c4;border-left-color:#cfcfcf"></div>
<div style="left:293.4px;top:347.5px;width:13.8px;height:15.7px;background:#e4e4e4;border:1px solid #c6c6c6"></div>
<div style="left:293.4px;top:354.95px;width:13.8px;height:0.8px;background:#c2c2c2"></div>
<svg style="left:297.30px;top:350.00px" width="6.0" height="3.4" viewBox="0 0 6 3.4"><path d="M0 3.4H6L3 0Z" fill="#111"/></svg>
<svg style="left:297.30px;top:357.40px" width="6.0" height="3.4" viewBox="0 0 6 3.4"><path d="M0 0H6L3 3.4Z" fill="#111"/></svg>
<span class="t" style="top:335.80px;font-size:8.7px;line-height:12.2px;color:#111;white-space:pre;letter-spacing:-0.110px;font-family:'DejaVu Sans Condensed','Liberation Sans',sans-serif;left:310.80px;">Stock</span>
<div style="left:311px;top:347.1px;width:60px;height:16.5px;background:#eeeeee;border:1px solid #dcdcdc;border-top-color:#c4c4c4;border-left-color:#cfcfcf"></div>
<span class="t" style="top:335.80px;font-size:8.7px;line-height:12.2px;color:#111;white-space:pre;letter-spacing:0.236px;font-family:'DejaVu Sans Condensed','Liberation Sans',sans-serif;left:374.00px;">P. Servir</span>
<div style="left:374.4px;top:347.1px;width:60.8px;height:16.5px;background:#eeeeee;border:1px solid #dcdcdc;border-top-color:#c4c4c4;border-left-color:#cfcfcf"></div>
<span class="t" style="top:335.80px;font-size:8.7px;line-height:12.2px;color:#111;white-space:pre;letter-spacing:0.111px;font-family:'DejaVu Sans Condensed','Liberation Sans',sans-serif;left:438.80px;">P. Recibir</span>
<div style="left:439px;top:347.1px;width:60px;height:16.5px;background:#eeeeee;border:1px solid #dcdcdc;border-top-color:#c4c4c4;border-left-color:#cfcfcf"></div>
<span class="t" style="top:335.80px;font-size:8.7px;line-height:12.2px;color:#111;white-space:pre;letter-spacing:-0.299px;font-family:'DejaVu Sans Condensed','Liberation Sans',sans-serif;left:502.80px;">Disponible</span>
<div style="left:503px;top:347.1px;width:59.4px;height:16.5px;background:#eeeeee;border:1px solid #dcdcdc;border-top-color:#c4c4c4;border-left-color:#cfcfcf"></div>
<svg style="left:556.71px;top:337.61px" width="8.58" height="8.58" viewBox="0 0 13 13"><path d="M1.2 11.8L5 8" stroke="#e28a2a" stroke-width="2.2" stroke-linecap="round"/><circle cx="7.8" cy="5.2" r="4.2" fill="#d9ecfb" stroke="#8fb1d6" stroke-width="1.1"/><circle cx="6.8" cy="4.2" r="1.8" fill="#fff" opacity=".85"/></svg>
<span class="t" style="top:335.80px;font-size:8.7px;line-height:12.2px;color:#111;white-space:pre;letter-spacing:-0.054px;font-family:'DejaVu Sans Condensed','Liberation Sans',sans-serif;left:567.40px;"><u>R</u>égimen de iva</span>
<div style="left:567.2px;top:347.1px;width:268px;height:16.5px;background:#fff;border:1px solid #a9abb0;border-top-color:#8a8c91"></div>
<span class="t" style="top:350.35px;font-size:8.7px;line-height:12.2px;color:#222;white-space:pre;letter-spacing:-0.097px;font-family:'DejaVu Sans Condensed','Liberation Sans',sans-serif;left:570.20px;">Régimen general</span>
<svg style="left:823.6px;top:353.5px" width="7.6" height="4.4" viewBox="0 0 7.6 4.4"><path d="M0.4 0.4L3.8 3.8L7.2 0.4" stroke="#444" stroke-width=".9" fill="none"/></svg>
<span class="t" style="top:365.10px;font-size:8.7px;line-height:12.2px;color:#111;white-space:pre;letter-spacing:0.121px;font-family:'DejaVu Sans Condensed','Liberation Sans',sans-serif;left:54.20px;"><u>P</u>royecto</span>
<div style="left:54.2px;top:376.4px;width:35px;height:16.5px;background:#fff;border:1px solid #a9abb0;border-top-color:#8a8c91;border-left-color:#9a9ca1"></div>
<span class="t" style="top:378.95px;font-size:8.7px;line-height:12.2px;color:#222;white-space:pre;letter-spacing:-0.900px;font-family:'DejaVu Sans Condensed','Liberation Sans',sans-serif;left:57.20px;">20</span>
<div style="left:90.2px;top:376.4px;width:14.2px;height:16.5px;background:linear-gradient(#f2f2f2,#dedede);border:1px solid #cfcfcf"></div>
<svg style="left:91.06px;top:378.41px" width="12.48" height="12.48" viewBox="0 0 13 13"><path d="M1.2 11.8L5 8" stroke="#e28a2a" stroke-width="2.2" stroke-linecap="round"/><circle cx="7.8" cy="5.2" r="4.2" fill="#d9ecfb" stroke="#8fb1d6" stroke-width="1.1"/><circle cx="6.8" cy="4.2" r="1.8" fill="#fff" opacity=".85"/></svg>
<div style="left:105.6px;top:376.8px;width:8px;height:15.7px;background:#e4e4e4;border:1px solid #c6c6c6"></div>
<div style="left:105.6px;top:384.25px;width:8px;height:0.8px;background:#c2c2c2"></div>
<svg style="left:107.10px;top:378.30px" width="5.0" height="5.0" viewBox="0 0 5 5"><path d="M2.5 0V5M0 2.5H5" stroke="#111" stroke-width="1.4"/></svg>
<svg style="left:107.10px;top:387.10px" width="5.0" height="3.0" viewBox="0 0 5 3"><path d="M0 3H5L2.5 0Z" fill="#111"/></svg>
<div style="left:119px;top:376.4px;width:187.4px;height:16.5px;background:#eeeeee;border:1px solid #dcdcdc;border-top-color:#c4c4c4;border-left-color:#cfcfcf"></div>
<span class="t" style="top:378.95px;font-size:8.7px;line-height:12.2px;color:#222;white-space:pre;letter-spacing:0.236px;font-family:'DejaVu Sans Condensed','Liberation Sans',sans-serif;max-width:183.1px;overflow:hidden;left:122.80px;">INSTALACIÓN DE SISTEMA DE REFRIGERACIÓN</span>
<span class="t" style="top:365.10px;font-size:8.7px;line-height:12.2px;color:#111;white-space:pre;letter-spacing:-0.066px;font-family:'DejaVu Sans Condensed','Liberation Sans',sans-serif;left:310.80px;">Dirección</span>
<div style="left:311px;top:376.4px;width:44.2px;height:16.5px;background:#fff;border:1px solid #a9abb0;border-top-color:#8a8c91;border-left-color:#9a9ca1"></div>
<span class="t" style="top:378.95px;font-size:8.7px;line-height:12.2px;color:#222;white-space:pre;font-family:'DejaVu Sans Condensed','Liberation Sans',sans-serif;left:314.00px;">1</span>
<div style="left:356.6px;top:376.4px;width:13px;height:16.5px;background:linear-gradient(#f2f2f2,#dedede);border:1px solid #cfcfcf"></div>
<svg style="left:356.86px;top:378.41px" width="12.48" height="12.48" viewBox="0 0 13 13"><path d="M1.2 11.8L5 8" stroke="#e28a2a" stroke-width="2.2" stroke-linecap="round"/><circle cx="7.8" cy="5.2" r="4.2" fill="#d9ecfb" stroke="#8fb1d6" stroke-width="1.1"/><circle cx="6.8" cy="4.2" r="1.8" fill="#fff" opacity=".85"/></svg>
<div style="left:375px;top:376.4px;width:189px;height:16.5px;background:#eeeeee;border:1px solid #dcdcdc;border-top-color:#c4c4c4;border-left-color:#cfcfcf"></div>
<span class="t" style="top:378.95px;font-size:8.7px;line-height:12.2px;color:#222;white-space:pre;letter-spacing:0.098px;font-family:'DejaVu Sans Condensed','Liberation Sans',sans-serif;max-width:184.7px;overflow:hidden;left:378.80px;">Facturación</span>
<div style="left:51px;top:396px;width:795px;height:1px;background:#d9d9d9"></div>
<div style="left:54px;top:400.2px;width:788.6px;height:160.2px;background:#fff;border:1px solid #b2b2b2"></div>
<div style="left:55px;top:401.2px;width:786.6px;height:16.2px;background:linear-gradient(#fafafa,#f0f0f0 50%,#e6e6e6);border-bottom:1px solid #d0d0d0"></div>
<div style="left:55px;top:464.3px;width:772.4px;height:15.5px;background:#fdf0cc"></div>
<div style="left:55px;top:432.8px;width:772.4px;height:1px;background:#e3e3e3"></div>
<div style="left:55px;top:448.3px;width:772.4px;height:1px;background:#e3e3e3"></div>
<div style="left:55px;top:463.8px;width:772.4px;height:1px;background:#e3e3e3"></div>
<div style="left:55px;top:479.3px;width:772.4px;height:1px;background:#e3e3e3"></div>
<div style="left:111.5px;top:402.2px;width:1px;height:14.2px;background:#d6d6d6"></div>
<div style="left:111.5px;top:417.4px;width:1px;height:62.4px;background:#e3e3e3"></div>
<div style="left:209.5px;top:402.2px;width:1px;height:14.2px;background:#d6d6d6"></div>
<div style="left:209.5px;top:417.4px;width:1px;height:62.4px;background:#e3e3e3"></div>
<div style="left:422.5px;top:402.2px;width:1px;height:14.2px;background:#d6d6d6"></div>
<div style="left:422.5px;top:417.4px;width:1px;height:62.4px;background:#e3e3e3"></div>
<div style="left:467.5px;top:402.2px;width:1px;height:14.2px;background:#d6d6d6"></div>
<div style="left:467.5px;top:417.4px;width:1px;height:62.4px;background:#e3e3e3"></div>
<div style="left:503.9px;top:402.2px;width:1px;height:14.2px;background:#d6d6d6"></div>
<div style="left:503.9px;top:417.4px;width:1px;height:62.4px;background:#e3e3e3"></div>
<div style="left:574.3px;top:402.2px;width:1px;height:14.2px;background:#d6d6d6"></div>
<div style="left:574.3px;top:417.4px;width:1px;height:62.4px;background:#e3e3e3"></div>
<div style="left:610.5px;top:402.2px;width:1px;height:14.2px;background:#d6d6d6"></div>
<div style="left:610.5px;top:417.4px;width:1px;height:62.4px;background:#e3e3e3"></div>
<div style="left:646.5px;top:402.2px;width:1px;height:14.2px;background:#d6d6d6"></div>
<div style="left:646.5px;top:417.4px;width:1px;height:62.4px;background:#e3e3e3"></div>
<div style="left:732.1px;top:402.2px;width:1px;height:14.2px;background:#d6d6d6"></div>
<div style="left:732.1px;top:417.4px;width:1px;height:62.4px;background:#e3e3e3"></div>
<div style="left:777.5px;top:402.2px;width:1px;height:14.2px;background:#d6d6d6"></div>
<div style="left:777.5px;top:417.4px;width:1px;height:62.4px;background:#e3e3e3"></div>
<div style="left:826.9px;top:402.2px;width:1px;height:14.2px;background:#d6d6d6"></div>
<div style="left:826.9px;top:417.4px;width:1px;height:62.4px;background:#e3e3e3"></div>
<div style="left:828px;top:401.2px;width:13.6px;height:158.2px;background:#f7f7f7"></div>
<div style="left:828.4px;top:516px;width:12.8px;height:31px;background:#e6e6e6"></div>
<svg style="left:831.6px;top:406.6px" width="6.4" height="3.8" viewBox="0 0 6.4 3.8"><path d="M0.4 3.4L3.2 0.6L6 3.4" stroke="#8a8a8a" stroke-width=".9" fill="none"/></svg>
<svg style="left:832.2px;top:551.4px" width="5.2" height="3" viewBox="0 0 5.2 3"><path d="M0 0H5.2L2.6 3Z" fill="#777"/></svg>
<span class="t" style="top:403.40px;font-size:8.7px;line-height:12.2px;color:#111;white-space:pre;letter-spacing:0.080px;font-family:'DejaVu Sans Condensed','Liberation Sans',sans-serif;max-width:54.6px;overflow:hidden;left:56.80px;">Capítulo/Partida</span>
<span class="t" style="top:403.40px;font-size:8.7px;line-height:12.2px;color:#111;white-space:pre;letter-spacing:-0.229px;font-family:'DejaVu Sans Condensed','Liberation Sans',sans-serif;left:114.80px;">Artículo</span>
<svg style="left:200.17px;top:405.47px" width="8.06" height="8.06" viewBox="0 0 13 13"><path d="M1.2 11.8L5 8" stroke="#e28a2a" stroke-width="2.2" stroke-linecap="round"/><circle cx="7.8" cy="5.2" r="4.2" fill="#d9ecfb" stroke="#8fb1d6" stroke-width="1.1"/><circle cx="6.8" cy="4.2" r="1.8" fill="#fff" opacity=".85"/></svg>
<span class="t" style="top:403.40px;font-size:8.7px;line-height:12.2px;color:#111;white-space:pre;letter-spacing:-0.209px;font-family:'DejaVu Sans Condensed','Liberation Sans',sans-serif;left:212.80px;">Nombre</span>
<svg style="left:412.37px;top:405.47px" width="8.06" height="8.06" viewBox="0 0 13 13"><path d="M1.2 11.8L5 8" stroke="#e28a2a" stroke-width="2.2" stroke-linecap="round"/><circle cx="7.8" cy="5.2" r="4.2" fill="#d9ecfb" stroke="#8fb1d6" stroke-width="1.1"/><circle cx="6.8" cy="4.2" r="1.8" fill="#fff" opacity=".85"/></svg>
<span class="t" style="top:403.40px;font-size:8.7px;line-height:12.2px;color:#111;white-space:pre;letter-spacing:-0.670px;font-family:'DejaVu Sans Condensed','Liberation Sans',sans-serif;left:425.30px;">Alm</span>
<span class="t" style="top:403.40px;font-size:8.7px;line-height:12.2px;color:#111;white-space:pre;letter-spacing:0.040px;font-family:'DejaVu Sans Condensed','Liberation Sans',sans-serif;left:470.00px;">Cant</span>
<span class="t" style="top:403.40px;font-size:8.7px;line-height:12.2px;color:#111;white-space:pre;letter-spacing:-0.208px;font-family:'DejaVu Sans Condensed','Liberation Sans',sans-serif;left:506.30px;">Precio</span>
<span class="t" style="top:403.40px;font-size:8.7px;line-height:12.2px;color:#111;white-space:pre;letter-spacing:-0.338px;font-family:'DejaVu Sans Condensed','Liberation Sans',sans-serif;left:577.00px;">Dto</span>
<span class="t" style="top:403.40px;font-size:8.7px;line-height:12.2px;color:#111;white-space:pre;letter-spacing:-0.359px;font-family:'DejaVu Sans Condensed','Liberation Sans',sans-serif;left:613.00px;">Iva</span>
<span class="t" style="top:403.40px;font-size:8.7px;line-height:12.2px;color:#111;white-space:pre;letter-spacing:-0.058px;font-family:'DejaVu Sans Condensed','Liberation Sans',sans-serif;left:648.80px;">Importe</span>
<span class="t" style="top:403.40px;font-size:8.7px;line-height:12.2px;color:#111;white-space:pre;letter-spacing:-0.089px;font-family:'DejaVu Sans Condensed','Liberation Sans',sans-serif;left:734.40px;">Servido</span>
<span class="t" style="top:403.40px;font-size:8.7px;line-height:12.2px;color:#111;white-space:pre;letter-spacing:-0.044px;font-family:'DejaVu Sans Condensed','Liberation Sans',sans-serif;left:780.00px;">Pendiente</span>
<div style="left:57px;top:420.75px;width:10px;height:9.6px;background:linear-gradient(#52a6f4,#2c86e4);border-radius:1px;color:#fff;font:bold 8.6px/9.8px 'Liberation Sans',sans-serif;text-align:center">C</div>
<span class="t" style="top:419.55px;font-size:8.7px;line-height:12.2px;color:#111;white-space:pre;letter-spacing:0.339px;font-family:'DejaVu Sans Condensed','Liberation Sans',sans-serif;left:71.20px;">001</span>
<div style="left:115.2px;top:421.85px;width:7.6px;height:7.6px;background:linear-gradient(#fff,#dcdcdc);border:1px solid #8f8f8f;border-radius:1px"></div>
<svg style="left:117.20px;top:423.85px" width="3.6" height="3.6" viewBox="0 0 3.6 3.6"><path d="M1.8 0V3.6M0 1.8H3.6" stroke="#111" stroke-width="1"/></svg>
<span class="t" style="top:419.55px;font-size:8.7px;line-height:12.2px;color:#a51d33;white-space:pre;letter-spacing:0.185px;font-family:'DejaVu Sans Condensed','Liberation Sans',sans-serif;left:212.80px;">CUADRO ELÉCTRICO</span>
<span class="t" style="top:419.55px;font-size:8.7px;line-height:12.2px;color:#111;white-space:pre;font-family:'DejaVu Sans Condensed','Liberation Sans',sans-serif;right:533.80px;">1</span>
<span class="t" style="top:419.55px;font-size:8.7px;line-height:12.2px;color:#111;white-space:pre;letter-spacing:-0.135px;font-family:'DejaVu Sans Condensed','Liberation Sans',sans-serif;right:497.94px;">0,20</span>
<span class="t" style="top:419.55px;font-size:8.7px;line-height:12.2px;color:#a51d33;white-space:pre;letter-spacing:0.200px;font-family:'DejaVu Sans Condensed','Liberation Sans',sans-serif;right:426.40px;">2.020,00</span>
<span class="t" style="top:419.55px;font-size:8.7px;line-height:12.2px;color:#111;white-space:pre;letter-spacing:0.213px;font-family:'DejaVu Sans Condensed','Liberation Sans',sans-serif;right:354.99px;">21%</span>
<div style="left:680px;top:419.65px;width:10.6px;height:12px;overflow:hidden"><span style="position:absolute;right:-3px;top:0;font-size:8.7px;line-height:12px;color:#111;white-space:pre">4</span></div>
<span class="t" style="top:419.55px;font-size:8.7px;line-height:12.2px;color:#111;white-space:pre;letter-spacing:-0.029px;font-family:'DejaVu Sans Condensed','Liberation Sans',sans-serif;right:269.63px;">404,00</span>
<span class="t" style="top:419.55px;font-size:8.7px;line-height:12.2px;color:#111;white-space:pre;letter-spacing:-0.135px;font-family:'DejaVu Sans Condensed','Liberation Sans',sans-serif;right:175.94px;">0,20</span>
<div style="left:57px;top:436.25px;width:10px;height:9.6px;background:linear-gradient(#52a6f4,#2c86e4);border-radius:1px;color:#fff;font:bold 8.6px/9.8px 'Liberation Sans',sans-serif;text-align:center">C</div>
<span class="t" style="top:435.05px;font-size:8.7px;line-height:12.2px;color:#111;white-space:pre;letter-spacing:0.339px;font-family:'DejaVu Sans Condensed','Liberation Sans',sans-serif;left:71.20px;">002</span>
<div style="left:115.2px;top:437.35px;width:7.6px;height:7.6px;background:linear-gradient(#fff,#dcdcdc);border:1px solid #8f8f8f;border-radius:1px"></div>
<svg style="left:117.20px;top:439.35px" width="3.6" height="3.6" viewBox="0 0 3.6 3.6"><path d="M1.8 0V3.6M0 1.8H3.6" stroke="#111" stroke-width="1"/></svg>
<span class="t" style="top:435.05px;font-size:8.7px;line-height:12.2px;color:#a51d33;white-space:pre;letter-spacing:0.138px;font-family:'DejaVu Sans Condensed','Liberation Sans',sans-serif;left:212.80px;">INSTALACIÓN DE CABLEADO</span>
<span class="t" style="top:435.05px;font-size:8.7px;line-height:12.2px;color:#111;white-space:pre;font-family:'DejaVu Sans Condensed','Liberation Sans',sans-serif;right:533.80px;">1</span>
<span class="t" style="top:435.05px;font-size:8.7px;line-height:12.2px;color:#111;white-space:pre;letter-spacing:-0.135px;font-family:'DejaVu Sans Condensed','Liberation Sans',sans-serif;right:497.94px;">0,25</span>
<span class="t" style="top:435.05px;font-size:8.7px;line-height:12.2px;color:#a51d33;white-space:pre;letter-spacing:0.200px;font-family:'DejaVu Sans Condensed','Liberation Sans',sans-serif;right:426.40px;">1.597,80</span>
<span class="t" style="top:435.05px;font-size:8.7px;line-height:12.2px;color:#111;white-space:pre;letter-spacing:0.213px;font-family:'DejaVu Sans Condensed','Liberation Sans',sans-serif;right:354.99px;">21%</span>
<div style="left:680px;top:435.15px;width:10.6px;height:12px;overflow:hidden"><span style="position:absolute;right:-3px;top:0;font-size:8.7px;line-height:12px;color:#111;white-space:pre">3</span></div>
<span class="t" style="top:435.05px;font-size:8.7px;line-height:12.2px;color:#111;white-space:pre;letter-spacing:-0.029px;font-family:'DejaVu Sans Condensed','Liberation Sans',sans-serif;right:269.63px;">399,45</span>
<span class="t" style="top:435.05px;font-size:8.7px;line-height:12.2px;color:#111;white-space:pre;letter-spacing:-0.135px;font-family:'DejaVu Sans Condensed','Liberation Sans',sans-serif;right:175.94px;">0,25</span>
<div style="left:57px;top:451.75px;width:10px;height:9.6px;background:linear-gradient(#52a6f4,#2c86e4);border-radius:1px;color:#fff;font:bold 8.6px/9.8px 'Liberation Sans',sans-serif;text-align:center">C</div>
<span class="t" style="top:450.55px;font-size:8.7px;line-height:12.2px;color:#111;white-space:pre;letter-spacing:0.339px;font-family:'DejaVu Sans Condensed','Liberation Sans',sans-serif;left:71.20px;">003</span>
<div style="left:115.2px;top:452.85px;width:7.6px;height:7.6px;background:linear-gradient(#fff,#dcdcdc);border:1px solid #8f8f8f;border-radius:1px"></div>
<svg style="left:117.20px;top:454.85px" width="3.6" height="3.6" viewBox="0 0 3.6 3.6"><path d="M1.8 0V3.6M0 1.8H3.6" stroke="#111" stroke-width="1"/></svg>
<span class="t" style="top:450.55px;font-size:8.7px;line-height:12.2px;color:#a51d33;white-space:pre;letter-spacing:0.323px;font-family:'DejaVu Sans Condensed','Liberation Sans',sans-serif;left:212.80px;">INSTALACIÓN CLIMATIZACIÓN</span>
<span class="t" style="top:450.55px;font-size:8.7px;line-height:12.2px;color:#111;white-space:pre;font-family:'DejaVu Sans Condensed','Liberation Sans',sans-serif;right:533.80px;">1</span>
<span class="t" style="top:450.55px;font-size:8.7px;line-height:12.2px;color:#111;white-space:pre;letter-spacing:-0.135px;font-family:'DejaVu Sans Condensed','Liberation Sans',sans-serif;right:497.94px;">0,30</span>
<span class="t" style="top:450.55px;font-size:8.7px;line-height:12.2px;color:#a51d33;white-space:pre;letter-spacing:0.129px;font-family:'DejaVu Sans Condensed','Liberation Sans',sans-serif;right:426.47px;">15.000,00</span>
<span class="t" style="top:450.55px;font-size:8.7px;line-height:12.2px;color:#111;white-space:pre;letter-spacing:0.213px;font-family:'DejaVu Sans Condensed','Liberation Sans',sans-serif;right:354.99px;">21%</span>
<div style="left:680px;top:450.65px;width:10.6px;height:12px;overflow:hidden"><span style="position:absolute;right:-3px;top:0;font-size:8.7px;line-height:12px;color:#111;white-space:pre">4.5</span></div>
<span class="t" style="top:450.55px;font-size:8.7px;line-height:12.2px;color:#111;white-space:pre;letter-spacing:0.172px;font-family:'DejaVu Sans Condensed','Liberation Sans',sans-serif;right:269.43px;">4.500,00</span>
<span class="t" style="top:450.55px;font-size:8.7px;line-height:12.2px;color:#111;white-space:pre;letter-spacing:-0.135px;font-family:'DejaVu Sans Condensed','Liberation Sans',sans-serif;right:175.94px;">0,30</span>
<div style="left:57px;top:467.25px;width:10px;height:9.6px;background:linear-gradient(#52a6f4,#2c86e4);border-radius:1px;color:#fff;font:bold 8.6px/9.8px 'Liberation Sans',sans-serif;text-align:center">C</div>
<div style="left:115.2px;top:468.35px;width:7.6px;height:7.6px;background:linear-gradient(#fff,#e6e6e6);border:1px solid #9a9a9a;border-radius:1px"></div>
<span class="t" style="top:466.05px;font-size:8.7px;line-height:12.2px;color:#a51d33;white-space:pre;letter-spacing:-0.004px;font-family:'DejaVu Sans Condensed','Liberation Sans',sans-serif;left:212.80px;">Entrega Presupuesto de cliente 27</span>
<span class="t" style="top:466.05px;font-size:8.7px;line-height:12.2px;color:#111;white-space:pre;font-family:'DejaVu Sans Condensed','Liberation Sans',sans-serif;right:533.80px;">1</span>
<span class="t" style="top:466.05px;font-size:8.7px;line-height:12.2px;color:#111;white-space:pre;letter-spacing:0.045px;font-family:'DejaVu Sans Condensed','Liberation Sans',sans-serif;right:497.75px;">-1,00</span>
<span class="t" style="top:466.05px;font-size:8.7px;line-height:12.2px;color:#111;white-space:pre;letter-spacing:-0.029px;font-family:'DejaVu Sans Condensed','Liberation Sans',sans-serif;right:426.63px;">706,26</span>
<span class="t" style="top:466.05px;font-size:8.7px;line-height:12.2px;color:#111;white-space:pre;letter-spacing:0.213px;font-family:'DejaVu Sans Condensed','Liberation Sans',sans-serif;right:354.99px;">21%</span>
<div style="left:680px;top:466.15px;width:10.6px;height:12px;overflow:hidden"><span style="position:absolute;right:-3px;top:0;font-size:8.7px;line-height:12px;color:#111;white-space:pre">-7</span></div>
<span class="t" style="top:466.05px;font-size:8.7px;line-height:12.2px;color:#111;white-space:pre;letter-spacing:0.071px;font-family:'DejaVu Sans Condensed','Liberation Sans',sans-serif;right:269.53px;">-706,26</span>
<span class="t" style="top:466.05px;font-size:8.7px;line-height:12.2px;color:#111;white-space:pre;letter-spacing:0.045px;font-family:'DejaVu Sans Condensed','Liberation Sans',sans-serif;right:175.75px;">-1,00</span>
<div style="left:51px;top:564px;width:795px;height:1px;background:#dcdcdc"></div>
<div style="left:51px;top:565px;width:795px;height:1px;background:#fafafa"></div>
<span class="t" style="top:565.90px;font-size:8.7px;line-height:12.2px;color:#111;white-space:pre;letter-spacing:-0.005px;font-family:'DejaVu Sans Condensed','Liberation Sans',sans-serif;left:54.00px;">Tipo reten.</span>
<div style="left:54.4px;top:578.5px;width:72.6px;height:16px;background:#fff7dc;border:1px solid #e9e9e9;border-top-color:#dadada;border-left-color:#e0e0e0"></div>
<span class="t" style="top:580.50px;font-size:8.7px;line-height:12.2px;color:#111;white-space:pre;letter-spacing:-0.120px;font-family:'DejaVu Sans Condensed','Liberation Sans',sans-serif;left:57.20px;">Sin retención</span>
<span class="t" style="top:565.90px;font-size:8.7px;line-height:12.2px;color:#111;white-space:pre;letter-spacing:0.246px;font-family:'DejaVu Sans Condensed','Liberation Sans',sans-serif;left:131.20px;">% Reten.</span>
<div style="left:131.8px;top:578.5px;width:71.6px;height:16px;background:#fff7dc;border:1px solid #e9e9e9;border-top-color:#dadada;border-left-color:#e0e0e0"></div>
<span class="t" style="top:580.50px;font-size:8.7px;line-height:12.2px;color:#111;white-space:pre;letter-spacing:-0.806px;font-family:'DejaVu Sans Condensed','Liberation Sans',sans-serif;right:800.41px;">0%</span>
<span class="t" style="top:565.90px;font-size:8.7px;line-height:12.2px;color:#111;white-space:pre;letter-spacing:-0.011px;font-family:'DejaVu Sans Condensed','Liberation Sans',sans-serif;left:207.20px;">Retención</span>
<div style="left:208px;top:578.5px;width:72.4px;height:16px;background:#fff7dc;border:1px solid #e9e9e9;border-top-color:#dadada;border-left-color:#e0e0e0"></div>
<span class="t" style="top:565.90px;font-size:8.7px;line-height:12.2px;color:#111;white-space:pre;letter-spacing:-0.144px;font-family:'DejaVu Sans Condensed','Liberation Sans',sans-serif;left:289.20px;">Bruto</span>
<div style="left:290.6px;top:578.5px;width:72px;height:16px;background:#fff7dc;border:1px solid #e9e9e9;border-top-color:#dadada;border-left-color:#e0e0e0"></div>
<span class="t" style="top:580.50px;font-size:8.7px;line-height:12.2px;color:#111;white-space:pre;letter-spacing:-0.029px;font-family:'DejaVu Sans Condensed','Liberation Sans',sans-serif;right:640.83px;">345,00</span>
<span class="t" style="top:565.90px;font-size:8.7px;line-height:12.2px;color:#111;white-space:pre;letter-spacing:-0.071px;font-family:'DejaVu Sans Condensed','Liberation Sans',sans-serif;left:372.00px;">Descuento</span>
<div style="left:372px;top:578.5px;width:73.4px;height:16px;background:#fff7dc;border:1px solid #e9e9e9;border-top-color:#dadada;border-left-color:#e0e0e0"></div>
<span class="t" style="top:565.90px;font-size:8.7px;line-height:12.2px;color:#111;white-space:pre;letter-spacing:-0.049px;font-family:'DejaVu Sans Condensed','Liberation Sans',sans-serif;left:453.80px;">Base</span>
<div style="left:454.6px;top:578.5px;width:72.8px;height:16px;background:#fff7dc;border:1px solid #e9e9e9;border-top-color:#dadada;border-left-color:#e0e0e0"></div>
<span class="t" style="top:580.50px;font-size:8.7px;line-height:12.2px;color:#111;white-space:pre;letter-spacing:-0.029px;font-family:'DejaVu Sans Condensed','Liberation Sans',sans-serif;right:476.03px;">345,00</span>
<span class="t" style="top:565.90px;font-size:8.7px;line-height:12.2px;color:#111;white-space:pre;letter-spacing:0.031px;font-family:'DejaVu Sans Condensed','Liberation Sans',sans-serif;left:531.00px;">IVA</span>
<div style="left:531.6px;top:578.5px;width:72.8px;height:16px;background:#fff7dc;border:1px solid #e9e9e9;border-top-color:#dadada;border-left-color:#e0e0e0"></div>
<span class="t" style="top:580.50px;font-size:8.7px;line-height:12.2px;color:#111;white-space:pre;letter-spacing:0.006px;font-family:'DejaVu Sans Condensed','Liberation Sans',sans-serif;right:398.99px;">55,20</span>
<span class="t" style="top:565.90px;font-size:8.7px;line-height:12.2px;color:#111;white-space:pre;letter-spacing:-0.035px;font-family:'DejaVu Sans Condensed','Liberation Sans',sans-serif;left:608.00px;">Rec Equiv</span>
<div style="left:608.2px;top:578.5px;width:72.8px;height:16px;background:#fff7dc;border:1px solid #e9e9e9;border-top-color:#dadada;border-left-color:#e0e0e0"></div>
<span class="t" style="top:580.50px;font-size:8.7px;line-height:12.2px;color:#111;white-space:pre;letter-spacing:0.006px;font-family:'DejaVu Sans Condensed','Liberation Sans',sans-serif;right:322.99px;">13,80</span>
<span class="t" style="top:565.90px;font-size:8.7px;line-height:12.2px;color:#111;white-space:pre;letter-spacing:0.316px;font-family:'DejaVu Sans Condensed','Liberation Sans',sans-serif;left:684.30px;">IRPF</span>
<div style="left:685.2px;top:578.5px;width:72.4px;height:16px;background:#fff7dc;border:1px solid #e9e9e9;border-top-color:#dadada;border-left-color:#e0e0e0"></div>
<span class="t" style="top:565.90px;font-size:8.7px;line-height:12.2px;color:#111;white-space:pre;letter-spacing:0.198px;font-family:'DejaVu Sans Condensed','Liberation Sans',sans-serif;left:766.60px;">Total</span>
<div style="left:767px;top:578.5px;width:73.8px;height:16px;background:#fff7dc;border:1px solid #e9e9e9;border-top-color:#dadada;border-left-color:#e0e0e0"></div>
<span class="t" style="top:580.50px;font-size:8.7px;line-height:12.2px;color:#111;white-space:pre;letter-spacing:0.046px;font-weight:bold;font-family:'DejaVu Sans Condensed','Liberation Sans',sans-serif;right:161.55px;">414,00</span>
<div style="left:285px;top:566px;width:1px;height:33px;background:#d4d4d4"></div>
<div style="left:286px;top:566px;width:1px;height:33px;background:#fbfbfb"></div>
<div style="left:367px;top:566px;width:1px;height:33px;background:#d4d4d4"></div>
<div style="left:368px;top:566px;width:1px;height:33px;background:#fbfbfb"></div>
<div style="left:449.6px;top:566px;width:1px;height:33px;background:#d4d4d4"></div>
<div style="left:450.6px;top:566px;width:1px;height:33px;background:#fbfbfb"></div>
<div style="left:762.4px;top:566px;width:1px;height:33px;background:#d4d4d4"></div>
<div style="left:763.4px;top:566px;width:1px;height:33px;background:#fbfbfb"></div>
<div style="left:851px;top:220.5px;width:95.6px;height:30.8px;background:linear-gradient(#e6e8ea,#dadde0 30%,#d3d7da 50%,#dde0e2 75%,#e2e4e6);border:1px solid #b8bcc0;border-radius:3px;box-shadow:inset 0 1px 0 rgba(255,255,255,.6)"></div>
<div style="left:851px;top:252.5px;width:95.6px;height:60.8px;background:linear-gradient(#e6e8ea,#dadde0 30%,#d3d7da 50%,#dde0e2 75%,#e2e4e6);border:1px solid #b8bcc0;border-radius:3px;box-shadow:inset 0 1px 0 rgba(255,255,255,.6)"></div>
<div style="left:851px;top:314.5px;width:95.6px;height:60.9px;background:linear-gradient(#e6e8ea,#dadde0 30%,#d3d7da 50%,#dde0e2 75%,#e2e4e6);border:1px solid #b8bcc0;border-radius:3px;box-shadow:inset 0 1px 0 rgba(255,255,255,.6)"></div>
<div style="left:851px;top:376.6px;width:95.6px;height:60.6px;background:linear-gradient(#e6e8ea,#dadde0 30%,#d3d7da 50%,#dde0e2 75%,#e2e4e6);border:1px solid #b8bcc0;border-radius:3px;box-shadow:inset 0 1px 0 rgba(255,255,255,.6)"></div>
<div style="left:851px;top:438.8px;width:95.6px;height:60.4px;background:linear-gradient(#e6e8ea,#dadde0 30%,#d3d7da 50%,#dde0e2 75%,#e2e4e6);border:1px solid #b8bcc0;border-radius:3px;box-shadow:inset 0 1px 0 rgba(255,255,255,.6)"></div>
<div style="left:851px;top:500.8px;width:95.6px;height:60px;background:linear-gradient(#e6e8ea,#dadde0 30%,#d3d7da 50%,#dde0e2 75%,#e2e4e6);border:1px solid #b8bcc0;border-radius:3px;box-shadow:inset 0 1px 0 rgba(255,255,255,.6)"></div>
<div style="left:851px;top:562.6px;width:95.6px;height:32.2px;background:linear-gradient(#e6e8ea,#dadde0 30%,#d3d7da 50%,#dde0e2 75%,#e2e4e6);border:1px solid #b8bcc0;border-radius:3px;box-shadow:inset 0 1px 0 rgba(255,255,255,.6)"></div>
<svg style="left:894.40px;top:232.50px" width="8.0" height="7.0" viewBox="0 0 8 7"><path d="M0.8 6.4H7.2L4 0.8Z" fill="#eceef0" stroke="#a4a8ab" stroke-width=".8"/></svg>
<svg style="left:894.90px;top:576.00px" width="7.0" height="6.0" viewBox="0 0 7 6"><path d="M0 0.2H7L3.5 5.8Z" fill="#111"/></svg>
<svg style="left:889.30px;top:265.30px" width="21.0" height="22.0" viewBox="0 0 21 22"><g fill="#b9bcbf" stroke="#8f9396" stroke-width=".7"><ellipse cx="7.6" cy="17" rx="6.6" ry="3"/><ellipse cx="7.6" cy="14" rx="6.6" ry="3"/><ellipse cx="7.6" cy="11" rx="6.6" ry="3"/><ellipse cx="7.6" cy="8" rx="6.6" ry="3"/><ellipse cx="7.6" cy="5" rx="6.6" ry="3"/><ellipse cx="15" cy="18.4" rx="5.4" ry="2.6"/><ellipse cx="15" cy="15.6" rx="5.4" ry="2.6"/><ellipse cx="15" cy="12.8" rx="5.4" ry="2.6"/><ellipse cx="15" cy="10" rx="5.4" ry="2.6"/></g></svg>
<span class="t" style="top:293.70px;font-size:8.7px;line-height:12.2px;color:#a9acae;white-space:pre;letter-spacing:-0.004px;font-family:'DejaVu Sans Condensed','Liberation Sans',sans-serif;text-shadow:0 1px 0 #fff;left:885.20px;">Cobrar</span>
<svg style="left:884.90px;top:328.00px" width="27.0" height="21.0" viewBox="0 0 27 21"><rect x="0.5" y="0.5" width="26" height="20" rx="1" fill="#f4f8fd" stroke="#5d8bd0" stroke-width=".9"/><rect x="0.5" y="0.5" width="26" height="3.6" fill="#3f84e0"/><g fill="#4a90e6"><rect x="1.6" y="5" width="4.2" height="4.2"/><rect x="6.6" y="5" width="4.2" height="4.2"/><rect x="11.6" y="5" width="4.2" height="4.2"/><rect x="16.6" y="5" width="4.2" height="4.2"/><rect x="21.6" y="5" width="4" height="4.2"/><rect x="1.6" y="10" width="4.2" height="4.2"/><rect x="11.6" y="10" width="4.2" height="4.2"/><rect x="16.6" y="10" width="4.2" height="4.2"/><rect x="21.6" y="10" width="4" height="4.2"/><rect x="1.6" y="15" width="4.2" height="4.2"/><rect x="6.6" y="15" width="4.2" height="4.2"/><rect x="11.6" y="15" width="4.2" height="4.2"/><rect x="16.6" y="15" width="4.2" height="4.2"/><rect x="21.6" y="15" width="4" height="4.2"/></g><g fill="#dcebfb"><rect x="2.2" y="5.6" width="3" height="3"/><rect x="7.2" y="5.6" width="3" height="3"/><rect x="12.2" y="5.6" width="3" height="3"/><rect x="17.2" y="5.6" width="3" height="3"/><rect x="22.2" y="5.6" width="2.8" height="3"/><rect x="2.2" y="10.6" width="3" height="3"/><rect x="12.2" y="10.6" width="3" height="3"/><rect x="17.2" y="10.6" width="3" height="3"/><rect x="22.2" y="10.6" width="2.8" height="3"/><rect x="2.2" y="15.6" width="3" height="3"/><rect x="7.2" y="15.6" width="3" height="3"/><rect x="12.2" y="15.6" width="3" height="3"/><rect x="17.2" y="15.6" width="3" height="3"/><rect x="22.2" y="15.6" width="2.8" height="3"/></g><rect x="6.4" y="9.8" width="4.8" height="4.8" fill="#fff" stroke="#e02020" stroke-width="1.1"/></svg>
<span class="t" style="top:355.30px;font-size:8.7px;line-height:12.2px;color:#111;white-space:pre;letter-spacing:-0.129px;font-family:'DejaVu Sans Condensed','Liberation Sans',sans-serif;left:884.00px;"><u>A</u>genda</span>
<svg style="left:886.90px;top:389.10px" width="23.0" height="23.0" viewBox="0 0 23 23"><path d="M1 6 L11.5 1 L22 6 V17 L11.5 22.4 L1 17Z" fill="#e6721a"/><path d="M1 6 L11.5 11 L22 6 L11.5 1Z" fill="#f9a040"/><path d="M11.5 11 V22.4 L22 17 V6Z" fill="#cf5a0c"/><path d="M11.5 11 V22.4 L1 17 V6Z" fill="#ec7e1c"/><path d="M3.4 13.4 L6.2 9.8 L9 14.6 L7.4 14 V18.6 L5 17.6 V13.9Z" fill="#ffe23a"/><path d="M14 14.4 L20 11.4 V15 L14 18Z" fill="#f3b060" opacity=".55"/></svg>
<span class="t" style="top:417.70px;font-size:8.7px;line-height:12.2px;color:#111;white-space:pre;letter-spacing:-0.041px;font-family:'DejaVu Sans Condensed','Liberation Sans',sans-serif;left:863.90px;">Gestión de envíos</span>
<svg style="left:886.90px;top:450.50px" width="23.0" height="23.0" viewBox="0 0 23 23"><path d="M1 6 L11.5 1 L22 6 V17 L11.5 22.4 L1 17Z" fill="#e6721a"/><path d="M1 6 L11.5 11 L22 6 L11.5 1Z" fill="#f9a040"/><path d="M11.5 11 V22.4 L22 17 V6Z" fill="#cf5a0c"/><path d="M11.5 11 V22.4 L1 17 V6Z" fill="#ec7e1c"/><path d="M3.4 13.4 L6.2 9.8 L9 14.6 L7.4 14 V18.6 L5 17.6 V13.9Z" fill="#ffe23a"/><path d="M14 14.4 L20 11.4 V15 L14 18Z" fill="#f3b060" opacity=".55"/></svg>
<span class="t" style="top:479.30px;font-size:8.7px;line-height:12.2px;color:#111;white-space:pre;letter-spacing:0.041px;font-family:'DejaVu Sans Condensed','Liberation Sans',sans-serif;left:861.80px;">Etiquetas de envío</span>
<svg style="left:883.44px;top:509.84px" width="29.120000000000005" height="29.120000000000005" viewBox="0 0 26 26"><path d="M4 3.6 L12 1.8 L24.6 16 L15.6 24.6 L2.6 11Z" fill="#f7b21a" stroke="#d98c08" stroke-width=".8"/><path d="M5.2 5 L11.6 3.4 L22.6 16 L19 19.4Z" fill="#ffd24a" opacity=".8"/><circle cx="6.8" cy="6.8" r="1.7" fill="#fff" stroke="#9a6a08" stroke-width=".6"/><path d="M6.8 6.8 Q2 12 6.4 17.4" stroke="#8d959c" stroke-width="1.1" fill="none"/></svg>
<span class="t" style="top:541.40px;font-size:8.7px;line-height:12.2px;color:#111;white-space:pre;letter-spacing:-0.061px;font-family:'DejaVu Sans Condensed','Liberation Sans',sans-serif;left:856.70px;">Etiquetas de artículos</span>
</div>
</body></html>
